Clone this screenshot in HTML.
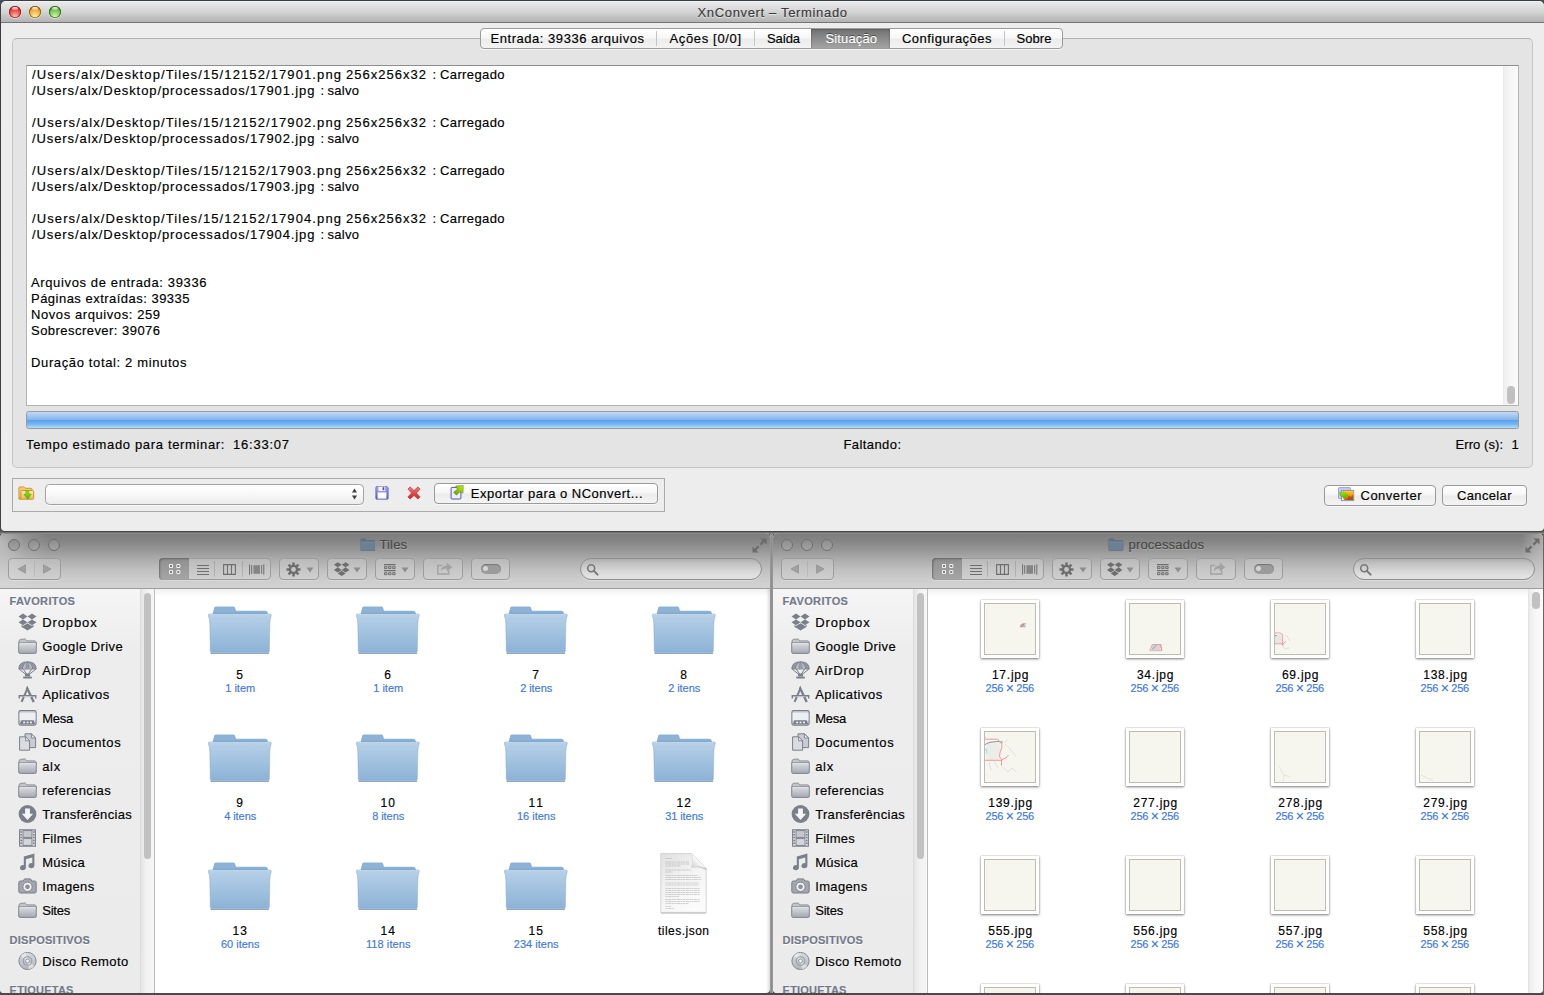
<!DOCTYPE html>
<html><head><meta charset="utf-8"><title>XnConvert</title><style>
html,body{margin:0;padding:0}
body{width:1544px;height:995px;overflow:hidden;background:#3e4a55;font-family:"Liberation Sans",sans-serif;position:relative}
div,svg{position:absolute;box-sizing:border-box}
.t{white-space:pre;-webkit-text-stroke:.16px currentColor;}
.btn{border:1px solid #9a9a9a;border-radius:4px;background:linear-gradient(#ffffff,#f6f6f6 45%,#ececec 55%,#f4f4f4);box-shadow:0 1px 0 rgba(255,255,255,.6)}
.fb{border:1px solid #9c9c9c;border-radius:4px;background:linear-gradient(rgba(255,255,255,.18),rgba(255,255,255,.06));box-shadow:0 1px 0 rgba(255,255,255,.25)}
</style></head><body>
<svg width="0" height="0" style="left:0;top:0"><defs><linearGradient id="sfg" x1="0" y1="0" x2="0" y2="1"><stop offset="0" stop-color="#dcdee2"/><stop offset="1" stop-color="#a3a7b0"/></linearGradient><linearGradient id="dsg" x1="0" y1="0" x2="0" y2="1"><stop offset="0" stop-color="#d9dbdf"/><stop offset="1" stop-color="#b1b4bb"/></linearGradient></defs></svg>
<div style="left:0px;top:0px;width:1544px;height:995px;background:linear-gradient(#44505a,#4a4d50 30px,#555 100%)"></div>
<div style="left:0px;top:531px;width:1544px;height:1px;background:#595959"></div>
<div style="left:0px;top:532px;width:1544px;height:1px;background:#6e6e6e"></div>
<div style="left:0px;top:533px;width:1544px;height:1px;background:#858585"></div>
<div style="left:0px;top:533px;width:770px;height:460px;background:#fff;border-radius:5px 5px 4px 4px;overflow:hidden">
<div style="left:0px;top:-533px;width:1544px;height:995px">
<div style="left:0px;top:533px;width:770px;height:55px;background:linear-gradient(#7c7c7c 0%,#858585 14%,#989898 32%,#aeaeae 50%,#c1c1c1 68%,#cdcdcd 85%,#d3d3d3 100%);"></div>
<div style="left:0px;top:588px;width:770px;height:1px;background:#9d9d9d"></div>
<div style="left:0px;top:533px;width:770px;height:1px;background:rgba(255,255,255,.10)"></div>
<div style="left:0px;top:534px;width:52px;height:54px;background:radial-gradient(ellipse 48px 62px at 0 8px,rgba(255,255,255,.42),rgba(255,255,255,.13) 50%,rgba(255,255,255,0) 100%)"></div>
<div style="left:8px;top:539px;width:12px;height:12px;border-radius:50%;border:1px solid #6f6f6f;background:linear-gradient(#8d8d8d,#a3a3a3)"></div>
<div style="left:28px;top:539px;width:12px;height:12px;border-radius:50%;border:1px solid #6f6f6f;background:linear-gradient(#8d8d8d,#a3a3a3)"></div>
<div style="left:48px;top:539px;width:12px;height:12px;border-radius:50%;border:1px solid #6f6f6f;background:linear-gradient(#8d8d8d,#a3a3a3)"></div>
<div class="fb" style="left:8px;top:558px;width:53px;height:22px;"><div style="left:25.3px;top:2px;width:1px;height:16px;background:rgba(0,0,0,.08)"></div><svg style="left:8px;top:5px" width="10" height="10" viewBox="0 0 10 10"><path d="M8.5 .8 V9.2 L1 5Z" fill="#a0a0a0" stroke="#8a8a8a" stroke-width=".6"/></svg><svg style="left:33px;top:5px" width="10" height="10" viewBox="0 0 10 10"><path d="M1.5 .8 V9.2 L9 5Z" fill="#a0a0a0" stroke="#8a8a8a" stroke-width=".6"/></svg></div>
<div class="fb" style="left:159px;top:558px;width:112px;height:22px;"><div style="left:-1px;top:-1px;width:30px;height:22px;border-radius:4px 0 0 4px;background:linear-gradient(#8f8f8f,#a6a6a6);box-shadow:inset 1px 1px 2px rgba(0,0,0,.3)"></div><div style="left:54.3px;top:2px;width:1px;height:16px;background:rgba(0,0,0,.13)"></div><div style="left:81.8px;top:2px;width:1px;height:16px;background:rgba(0,0,0,.13)"></div><svg style="left:8.8px;top:5.1px" width="12" height="11" viewBox="0 0 12 11"><path d="M.5 .5h3v3h-3zM7.8 .5h3v3h-3zM.5 6.6h3v3h-3zM7.8 6.6h3v3h-3z" fill="#7a7a7a" stroke="#f4f4f4" stroke-width="1"/></svg><svg style="left:36.7px;top:5px" width="12" height="12" viewBox="0 0 12 12"><path d="M0 1.5H12M0 4.5H12M0 7.5H12M0 10.5H12" stroke="#6e6e6e" stroke-width="1.1"/></svg><svg style="left:63px;top:4.8px" width="13" height="11" viewBox="0 0 13 11"><path d="M.6 .6H12.4V10.4H.6ZM4.5 .6V10.4M8.5 .6V10.4" fill="none" stroke="#6e6e6e" stroke-width="1.1"/></svg><svg style="left:88.6px;top:5px" width="16" height="11" viewBox="0 0 16 11"><path d="M.6 .3V10.7M2.7 1.2V9.8M12.7 1.2V9.8M14.8 .3V10.7" stroke="#6e6e6e" stroke-width="1"/><rect x="4.4" y="1.2" width="6.6" height="8.6" fill="#858585"/></svg></div>
<div class="fb" style="left:279.2px;top:558px;width:39.6px;height:21.6px;"><svg style="left:5.4px;top:2.6px" width="15" height="15" viewBox="0 0 15 15"><g stroke="#6e6e6e" stroke-width="2.5"><path d="M7.5 .5V14.5M.5 7.5H14.5M2.55 2.55L12.45 12.45M12.45 2.55L2.55 12.45"/></g><circle cx="7.5" cy="7.5" r="4.7" fill="#6e6e6e"/><circle cx="7.5" cy="7.5" r="2.4" fill="#c4c4c4"/></svg><svg style="left:25.6px;top:8px" width="8" height="6" viewBox="0 0 8 6"><path d="M.5 .5H7.5L4 5.5Z" fill="#8e8e8e"/></svg></div>
<div class="fb" style="left:327.1px;top:558px;width:39.5px;height:21.6px;"><svg style="left:5.2px;top:2.2px" width="17.4" height="16.2" viewBox="0 0 19 17"><path d="M5.2 1 L9.5 3.8 L5.2 6.6 L1 3.8Z M13.8 1 L18 3.8 L13.8 6.6 L9.5 3.8Z M5.2 6.6 L9.5 9.4 L5.2 12.2 L1 9.4Z M13.8 6.6 L18 9.4 L13.8 12.2 L9.5 9.4Z M5.2 13.2 L9.5 10.4 L13.8 13.2 L9.5 16Z" fill="#6e6e6e"/></svg><svg style="left:25px;top:8px" width="8" height="6" viewBox="0 0 8 6"><path d="M.5 .5H7.5L4 5.5Z" fill="#8e8e8e"/></svg></div>
<div class="fb" style="left:375px;top:558px;width:39.6px;height:21.6px;"><svg style="left:7.6px;top:4.7px" width="12" height="12" viewBox="0 0 12 12"><path d="M0 .6H11.6M0 6.6H11.6" stroke="#6e6e6e" stroke-width="1.1"/><path d="M.5 2.6h2.4v2h-2.4zM4.6 2.6h2.4v2h-2.4zM8.7 2.6h2.4v2h-2.4zM.5 8.7h2.4v2h-2.4zM4.6 8.7h2.4v2h-2.4zM8.7 8.7h2.4v2h-2.4z" fill="none" stroke="#6e6e6e" stroke-width="1"/></svg><svg style="left:25px;top:8px" width="8" height="6" viewBox="0 0 8 6"><path d="M.5 .5H7.5L4 5.5Z" fill="#8e8e8e"/></svg></div>
<div class="fb" style="left:423px;top:558px;width:39.5px;height:21.6px;"><svg style="left:11.5px;top:2.4px" width="17.5" height="14" viewBox="0 0 17 14"><path d="M6 4.5H1.5V13H12.5V9.5" fill="none" stroke="#a2a2a2" stroke-width="1.4"/><path d="M4.5 10.5Q5 5 10.5 4.6V1.5L16 6.2L10.5 10.5V7.6Q6.5 7.6 4.5 10.5Z" fill="#a2a2a2"/></svg></div>
<div class="fb" style="left:470.9px;top:558px;width:39.5px;height:21.6px;"><div style="left:9px;top:4.8px;width:20px;height:10px;border-radius:5px;background:#9b9b9b;box-shadow:inset 0 1px 1px rgba(0,0,0,.25)"></div><div style="left:11.5px;top:7.3px;width:5px;height:5px;border-radius:50%;background:#d4d4d4"></div></div>
<div style="left:579.5px;top:558px;width:182.5px;height:22px;border:1px solid #8e8e8e;border-radius:11px;background:linear-gradient(#b0b0b0,#c9c9c9 35%,#dedede 75%,#e4e4e4);box-shadow:0 1px 0 rgba(255,255,255,.3)"><svg style="left:5px;top:4px" width="14" height="14" viewBox="0 0 14 14"><circle cx="5.2" cy="5.2" r="3.5" fill="none" stroke="#777" stroke-width="1.6"/><path d="M7.9 7.9L11.6 11.6" stroke="#777" stroke-width="2" stroke-linecap="round"/></svg></div>
<svg style="left:752px;top:538px" width="15" height="15" viewBox="0 0 15 15"><path d="M8.5 .5H14.5V6.5L12.3 4.3L9.2 7.4L7.6 5.8L10.7 2.7ZM6.5 14.5H.5V8.5L2.7 10.7L5.8 7.6L7.4 9.2L4.3 12.3Z" fill="#6b6b6b"/></svg>
<svg style="left:359.7px;top:538.3px" width="15.8" height="13.5" viewBox="0 0 17 14" preserveAspectRatio="none"><path d="M.5 2Q.5 .5 2 .5H6L7.2 2.200H15Q16.500 2.200 16.500 3.700V12Q16.500 13.500 15 13.500H2Q.5 13.500 .5 12Z" fill="#5d6f82"/><path d="M1.100 3.800H15.900V12Q15.900 12.900 15 12.900H2Q1.100 12.900 1.100 12Z" fill="#6c8093"/><path d="M1.100 4.200H15.900" stroke="#7d90a3" stroke-width=".7"/></svg>
<div class="t" style="left:379.50px;top:536.10px;font-size:13px;line-height:17px;color:#474747;letter-spacing:0.133px;text-shadow:0 1px 0 rgba(255,255,255,.22);">Tiles</div>
<div style="left:0px;top:589px;width:140px;height:404px;background:linear-gradient(#f5f5f5,#ededed 60px,#ebebeb)"></div>
<div style="left:139.5px;top:589px;width:15px;height:404px;background:linear-gradient(90deg,#e4e4e4,#f1f1f1 40%,#f6f6f6);border-left:1px solid #dcdcdc;border-right:1px solid #bdbdbd"></div>
<div style="left:143.5px;top:592.5px;width:7.5px;height:266px;background:#c1c1c1;border-radius:4px"></div>
<div class="t" style="left:9.60px;top:593.89px;font-size:11px;line-height:15px;color:#727989;letter-spacing:0.344px;font-weight:700;text-shadow:0 1px 0 #fff;">FAVORITOS</div>
<svg style="left:17.5px;top:613px" width="19" height="18" viewBox="0 0 19 18"><path d="M5 .6 L9.5 3.5 L5 6.4 L.5 3.5Z M14 .6 L18.5 3.5 L14 6.4 L9.5 3.5Z M5 6.4 L9.5 9.3 L5 12.2 L.5 9.3Z M14 6.4 L18.5 9.3 L14 12.2 L9.5 9.3Z" fill="#7a7f89"/><path d="M5 13.1 L9.5 10.2 L14 13.1 L15.6 12.1 V13.8 L9.5 17.4 L3.4 13.8 V12.1Z" fill="#7a7f89"/></svg>
<div class="t" style="left:42.20px;top:613.80px;font-size:13px;line-height:17px;color:#000;letter-spacing:0.893px;">Dropbox</div>
<svg style="left:17.5px;top:637.7px" width="19" height="17" viewBox="0 0 19 17"><path d="M1 3.2 Q1 1.6 2.4 1.4 L6.6 1 Q7.6 1 8 1.7 L8.7 2.9 H16.6 Q18 2.9 18 4.3 V6 H1Z" fill="#c2c5ca" stroke="#858992" stroke-width=".9"/><path d="M.7 4.9 H18.3 V14 Q18.3 15.4 16.9 15.4 H2.1 Q.7 15.4 .7 14Z" fill="url(#sfg)" stroke="#7b7f89" stroke-width=".9"/><path d="M1.3 5.6H17.7" stroke="#eceef0" stroke-width=".8"/></svg>
<div class="t" style="left:42.20px;top:637.80px;font-size:13px;line-height:17px;color:#000;letter-spacing:0.421px;">Google Drive</div>
<svg style="left:17.5px;top:661px" width="19" height="18" viewBox="0 0 19 18"><path d="M.8 8 Q.8 .8 9.5 .8 Q18.2 .8 18.2 8 Z" fill="#9095a0" stroke="#7a7f89" stroke-width=".9"/><path d="M4.4 7.8 Q5 2 9.5 1 Q14 2 14.6 7.8" fill="#b9bdc5" stroke="#7a7f89" stroke-width=".8"/><path d="M7.8 7.8 Q8 3 9.5 1 Q11 3 11.2 7.8" fill="#9a9fa9" stroke="#7a7f89" stroke-width=".6"/><path d="M1.2 8.2 L7.6 13.2 M17.8 8.2 L11.4 13.2 M5.4 8.2 L8.6 13 M13.6 8.2 L10.4 13" stroke="#7a7f89" stroke-width="1"/><rect x="7" y="12.6" width="5" height="2.8" fill="#7a7f89"/><rect x="5.2" y="15.6" width="8.6" height="1.9" fill="#7a7f89"/></svg>
<div class="t" style="left:42.20px;top:661.80px;font-size:13px;line-height:17px;color:#000;letter-spacing:0.739px;">AirDrop</div>
<svg style="left:17.5px;top:685px" width="19" height="18" viewBox="0 0 19 18"><path d="M9.6 .8 L2.6 16.6 L4.6 17.3 L10.2 4 Z" fill="#7a7f89"/><path d="M9.2 .8 L16.8 16.4 L14.6 17.4 L8 3.4Z" fill="#7a7f89"/><path d="M.6 10 H18.4 V13.4 H17 V11.6 H2 V13.4 H.6Z" fill="#7a7f89"/><path d="M5.6 11.6H13.6" stroke="#c5c8ce" stroke-width="1.2"/></svg>
<div class="t" style="left:42.20px;top:685.80px;font-size:13px;line-height:17px;color:#000;letter-spacing:0.486px;">Aplicativos</div>
<svg style="left:17.5px;top:709px" width="19" height="18" viewBox="0 0 19 18"><rect x=".9" y="1.6" width="17.2" height="14.6" rx="1.6" fill="#d5d7dc" stroke="#7a7f89" stroke-width="1.1"/><rect x="1.6" y="4" width="15.8" height="7.4" fill="#eceef1"/><path d="M3.4 11.2 H15.6 L17.4 15.5 H1.6Z" fill="#7a7f89"/><rect x="5.2" y="12.6" width="1.9" height="1.7" fill="#f4f4f6"/><rect x="8.6" y="12.6" width="1.9" height="1.7" fill="#f4f4f6"/><rect x="12" y="12.6" width="1.9" height="1.7" fill="#f4f4f6"/></svg>
<div class="t" style="left:42.20px;top:709.80px;font-size:13px;line-height:17px;color:#000;letter-spacing:-0.263px;">Mesa</div>
<svg style="left:17.5px;top:733px" width="19" height="18" viewBox="0 0 19 18"><path d="M7 .8 H13.6 L17.6 4.8 V14.6 H7Z" fill="#c9ccd2" stroke="#7a7f89" stroke-width="1"/><path d="M13.4 .8 V5 H17.6Z" fill="#eceef1" stroke="#7a7f89" stroke-width=".9"/><path d="M1.6 3.8 H7.8 L11.6 7.6 V17.2 H1.6Z" fill="#dadce1" stroke="#7a7f89" stroke-width="1"/><path d="M7.6 3.8 V7.8 H11.6Z" fill="#f2f3f5" stroke="#7a7f89" stroke-width=".9"/></svg>
<div class="t" style="left:42.20px;top:733.80px;font-size:13px;line-height:17px;color:#000;letter-spacing:0.613px;">Documentos</div>
<svg style="left:17.5px;top:757.7px" width="19" height="17" viewBox="0 0 19 17"><path d="M1 3.2 Q1 1.6 2.4 1.4 L6.6 1 Q7.6 1 8 1.7 L8.7 2.9 H16.6 Q18 2.9 18 4.3 V6 H1Z" fill="#c2c5ca" stroke="#858992" stroke-width=".9"/><path d="M.7 4.9 H18.3 V14 Q18.3 15.4 16.9 15.4 H2.1 Q.7 15.4 .7 14Z" fill="url(#sfg)" stroke="#7b7f89" stroke-width=".9"/><path d="M1.3 5.6H17.7" stroke="#eceef0" stroke-width=".8"/></svg>
<div class="t" style="left:42.20px;top:757.80px;font-size:13px;line-height:17px;color:#000;letter-spacing:0.690px;">alx</div>
<svg style="left:17.5px;top:781.7px" width="19" height="17" viewBox="0 0 19 17"><path d="M1 3.2 Q1 1.6 2.4 1.4 L6.6 1 Q7.6 1 8 1.7 L8.7 2.9 H16.6 Q18 2.9 18 4.3 V6 H1Z" fill="#c2c5ca" stroke="#858992" stroke-width=".9"/><path d="M.7 4.9 H18.3 V14 Q18.3 15.4 16.9 15.4 H2.1 Q.7 15.4 .7 14Z" fill="url(#sfg)" stroke="#7b7f89" stroke-width=".9"/><path d="M1.3 5.6H17.7" stroke="#eceef0" stroke-width=".8"/></svg>
<div class="t" style="left:42.20px;top:781.80px;font-size:13px;line-height:17px;color:#000;letter-spacing:0.419px;">referencias</div>
<svg style="left:17.5px;top:805px" width="19" height="18" viewBox="0 0 19 18"><circle cx="9.5" cy="9" r="8.9" fill="#7a7f89"/><path d="M7.1 3.6 H11.9 V8.8 H15.2 L9.5 14.9 L3.8 8.8 H7.1Z" fill="#f6f6f8"/></svg>
<div class="t" style="left:42.20px;top:805.80px;font-size:13px;line-height:17px;color:#000;letter-spacing:0.308px;">Transferências</div>
<svg style="left:17.5px;top:829px" width="19" height="18" viewBox="0 0 19 18"><rect x="1.6" y=".8" width="15.8" height="16.4" fill="#dfe1e5" stroke="#7a7f89" stroke-width="1.1"/><rect x="5" y="1.6" width="9" height="6.8" fill="#c4c7cd" stroke="#7a7f89" stroke-width=".9"/><rect x="5" y="9.6" width="9" height="6.8" fill="#d3d6db" stroke="#7a7f89" stroke-width=".9"/><path d="M2.4 3H4M2.4 5.8H4M2.4 8.6H4M2.4 11.4H4M2.4 14.2H4M15 3H16.6M15 5.8H16.6M15 8.6H16.6M15 11.4H16.6M15 14.2H16.6" stroke="#7a7f89" stroke-width="1.5"/></svg>
<div class="t" style="left:42.20px;top:829.80px;font-size:13px;line-height:17px;color:#000;letter-spacing:0.244px;">Filmes</div>
<svg style="left:17.5px;top:853px" width="19" height="18" viewBox="0 0 19 18"><path d="M5.8 3.4 L16.4 .6 V12.6 A3 2.5 -15 1 1 14.3 10.2 V4.6 L7.9 6.3 V14.6 A3 2.5 -15 1 1 5.8 12.2Z" fill="#7a7f89"/></svg>
<div class="t" style="left:42.20px;top:853.80px;font-size:13px;line-height:17px;color:#000;letter-spacing:0.264px;">Música</div>
<svg style="left:17.5px;top:877px" width="19" height="18" viewBox="0 0 19 18"><path d="M.8 5.6 Q.8 4 2.4 4 H5.2 L6.4 1.9 H12.6 L13.8 4 H16.6 Q18.2 4 18.2 5.6 V14.4 Q18.2 16 16.6 16 H2.4 Q.8 16 .8 14.4Z" fill="#a2a6af" stroke="#7a7f89" stroke-width="1"/><circle cx="9.5" cy="9.8" r="4.6" fill="#f4f5f6" stroke="#7a7f89" stroke-width=".9"/><circle cx="9.5" cy="9.8" r="2.4" fill="#8b9099"/></svg>
<div class="t" style="left:42.20px;top:877.80px;font-size:13px;line-height:17px;color:#000;letter-spacing:0.356px;">Imagens</div>
<svg style="left:17.5px;top:901.7px" width="19" height="17" viewBox="0 0 19 17"><path d="M1 3.2 Q1 1.6 2.4 1.4 L6.6 1 Q7.6 1 8 1.7 L8.7 2.9 H16.6 Q18 2.9 18 4.3 V6 H1Z" fill="#c2c5ca" stroke="#858992" stroke-width=".9"/><path d="M.7 4.9 H18.3 V14 Q18.3 15.4 16.9 15.4 H2.1 Q.7 15.4 .7 14Z" fill="url(#sfg)" stroke="#7b7f89" stroke-width=".9"/><path d="M1.3 5.6H17.7" stroke="#eceef0" stroke-width=".8"/></svg>
<div class="t" style="left:42.20px;top:901.80px;font-size:13px;line-height:17px;color:#000;letter-spacing:-0.226px;">Sites</div>
<div class="t" style="left:9.60px;top:932.89px;font-size:11px;line-height:15px;color:#727989;letter-spacing:0.243px;font-weight:700;text-shadow:0 1px 0 #fff;">DISPOSITIVOS</div>
<svg style="left:17.5px;top:952px" width="19" height="18" viewBox="0 0 19 18"><circle cx="9.5" cy="9" r="8.6" fill="url(#dsg)" stroke="#858992" stroke-width="1"/><path d="M9.5 9 L2.6 4 A8.5 8.5 0 0 1 8 .6Z M9.5 9 L16.4 14 A8.5 8.5 0 0 1 11 17.4Z" fill="#f2f3f5" opacity=".6"/><circle cx="9.5" cy="9" r="4.3" fill="none" stroke="#9a9ea7" stroke-width="1.1"/><circle cx="9.5" cy="9" r="1.9" fill="#f6f6f8" stroke="#8f939c" stroke-width=".9"/></svg>
<div class="t" style="left:42.20px;top:953.00px;font-size:13px;line-height:17px;color:#000;letter-spacing:0.396px;">Disco Remoto</div>
<div class="t" style="left:9.60px;top:982.89px;font-size:11px;line-height:15px;color:#727989;letter-spacing:0.208px;font-weight:700;text-shadow:0 1px 0 #fff;">ETIQUETAS</div>
<div style="left:155px;top:589px;width:615px;height:8px;background:linear-gradient(#f1f1f1,#fff)"></div>
<svg style="left:207.2px;top:605.6px" width="66" height="50" viewBox="0 0 66 50"><defs><linearGradient id="ff" x1="0" y1="0" x2="0" y2="1"><stop offset="0" stop-color="#b7d1e8"/><stop offset=".45" stop-color="#a3c3e0"/><stop offset="1" stop-color="#8cb2d7"/></linearGradient></defs><path d="M7.2 1.6 Q7.7 0.4 9.2 0.4 H26 Q27.5 0.4 28 1.6 L29 4.8 H58.5 Q60.3 4.8 60.5 6.5 L61 9 H5.4 Z" fill="#8db2d5"/><path d="M6 9 L6.3 6.6 H60.4 L61 9Z" fill="#84a9cd"/><path d="M2.6 8 H63 Q64.6 8 64.3 9.6 Q62.9 13 62.8 18 L62.3 44.9 Q62.3 46.7 60.5 46.7 H5.1 Q3.3 46.7 3.3 44.9 L2.8 18 Q2.7 13 1.3 9.6 Q1 8 2.6 8Z" fill="url(#ff)" stroke="#86abd0" stroke-width=".5"/><path d="M2.4 8.6 H63.2" stroke="#c9deef" stroke-width=".8" opacity=".9"/><path d="M3.5 46 Q3.7 47.2 5.1 47.2 H60.5 Q61.9 47.2 62.1 46 V46.9 Q61.9 48.1 60.5 48.1 H5.1 Q3.7 48.1 3.5 46.9Z" fill="#5b7c9c" opacity=".85"/></svg>
<div class="t" style="left:236.36px;top:666.84px;font-size:12px;line-height:16px;color:#000;">5</div>
<div class="t" style="left:225.20px;top:680.69px;font-size:11px;line-height:15px;color:#3f7ad6;letter-spacing:0.009px;">1 item</div>
<svg style="left:355.2px;top:605.6px" width="66" height="50" viewBox="0 0 66 50"><defs><linearGradient id="ff" x1="0" y1="0" x2="0" y2="1"><stop offset="0" stop-color="#b7d1e8"/><stop offset=".45" stop-color="#a3c3e0"/><stop offset="1" stop-color="#8cb2d7"/></linearGradient></defs><path d="M7.2 1.6 Q7.7 0.4 9.2 0.4 H26 Q27.5 0.4 28 1.6 L29 4.8 H58.5 Q60.3 4.8 60.5 6.5 L61 9 H5.4 Z" fill="#8db2d5"/><path d="M6 9 L6.3 6.6 H60.4 L61 9Z" fill="#84a9cd"/><path d="M2.6 8 H63 Q64.6 8 64.3 9.6 Q62.9 13 62.8 18 L62.3 44.9 Q62.3 46.7 60.5 46.7 H5.1 Q3.3 46.7 3.3 44.9 L2.8 18 Q2.7 13 1.3 9.6 Q1 8 2.6 8Z" fill="url(#ff)" stroke="#86abd0" stroke-width=".5"/><path d="M2.4 8.6 H63.2" stroke="#c9deef" stroke-width=".8" opacity=".9"/><path d="M3.5 46 Q3.7 47.2 5.1 47.2 H60.5 Q61.9 47.2 62.1 46 V46.9 Q61.9 48.1 60.5 48.1 H5.1 Q3.7 48.1 3.5 46.9Z" fill="#5b7c9c" opacity=".85"/></svg>
<div class="t" style="left:384.36px;top:666.84px;font-size:12px;line-height:16px;color:#000;">6</div>
<div class="t" style="left:373.20px;top:680.69px;font-size:11px;line-height:15px;color:#3f7ad6;letter-spacing:0.009px;">1 item</div>
<svg style="left:503.2px;top:605.6px" width="66" height="50" viewBox="0 0 66 50"><defs><linearGradient id="ff" x1="0" y1="0" x2="0" y2="1"><stop offset="0" stop-color="#b7d1e8"/><stop offset=".45" stop-color="#a3c3e0"/><stop offset="1" stop-color="#8cb2d7"/></linearGradient></defs><path d="M7.2 1.6 Q7.7 0.4 9.2 0.4 H26 Q27.5 0.4 28 1.6 L29 4.8 H58.5 Q60.3 4.8 60.5 6.5 L61 9 H5.4 Z" fill="#8db2d5"/><path d="M6 9 L6.3 6.6 H60.4 L61 9Z" fill="#84a9cd"/><path d="M2.6 8 H63 Q64.6 8 64.3 9.6 Q62.9 13 62.8 18 L62.3 44.9 Q62.3 46.7 60.5 46.7 H5.1 Q3.3 46.7 3.3 44.9 L2.8 18 Q2.7 13 1.3 9.6 Q1 8 2.6 8Z" fill="url(#ff)" stroke="#86abd0" stroke-width=".5"/><path d="M2.4 8.6 H63.2" stroke="#c9deef" stroke-width=".8" opacity=".9"/><path d="M3.5 46 Q3.7 47.2 5.1 47.2 H60.5 Q61.9 47.2 62.1 46 V46.9 Q61.9 48.1 60.5 48.1 H5.1 Q3.7 48.1 3.5 46.9Z" fill="#5b7c9c" opacity=".85"/></svg>
<div class="t" style="left:532.36px;top:666.84px;font-size:12px;line-height:16px;color:#000;">7</div>
<div class="t" style="left:520.20px;top:680.69px;font-size:11px;line-height:15px;color:#3f7ad6;letter-spacing:-0.069px;">2 itens</div>
<svg style="left:651.2px;top:605.6px" width="66" height="50" viewBox="0 0 66 50"><defs><linearGradient id="ff" x1="0" y1="0" x2="0" y2="1"><stop offset="0" stop-color="#b7d1e8"/><stop offset=".45" stop-color="#a3c3e0"/><stop offset="1" stop-color="#8cb2d7"/></linearGradient></defs><path d="M7.2 1.6 Q7.7 0.4 9.2 0.4 H26 Q27.5 0.4 28 1.6 L29 4.8 H58.5 Q60.3 4.8 60.5 6.5 L61 9 H5.4 Z" fill="#8db2d5"/><path d="M6 9 L6.3 6.6 H60.4 L61 9Z" fill="#84a9cd"/><path d="M2.6 8 H63 Q64.6 8 64.3 9.6 Q62.9 13 62.8 18 L62.3 44.9 Q62.3 46.7 60.5 46.7 H5.1 Q3.3 46.7 3.3 44.9 L2.8 18 Q2.7 13 1.3 9.6 Q1 8 2.6 8Z" fill="url(#ff)" stroke="#86abd0" stroke-width=".5"/><path d="M2.4 8.6 H63.2" stroke="#c9deef" stroke-width=".8" opacity=".9"/><path d="M3.5 46 Q3.7 47.2 5.1 47.2 H60.5 Q61.9 47.2 62.1 46 V46.9 Q61.9 48.1 60.5 48.1 H5.1 Q3.7 48.1 3.5 46.9Z" fill="#5b7c9c" opacity=".85"/></svg>
<div class="t" style="left:680.36px;top:666.84px;font-size:12px;line-height:16px;color:#000;">8</div>
<div class="t" style="left:668.20px;top:680.69px;font-size:11px;line-height:15px;color:#3f7ad6;letter-spacing:-0.069px;">2 itens</div>
<svg style="left:207.2px;top:733.6px" width="66" height="50" viewBox="0 0 66 50"><defs><linearGradient id="ff" x1="0" y1="0" x2="0" y2="1"><stop offset="0" stop-color="#b7d1e8"/><stop offset=".45" stop-color="#a3c3e0"/><stop offset="1" stop-color="#8cb2d7"/></linearGradient></defs><path d="M7.2 1.6 Q7.7 0.4 9.2 0.4 H26 Q27.5 0.4 28 1.6 L29 4.8 H58.5 Q60.3 4.8 60.5 6.5 L61 9 H5.4 Z" fill="#8db2d5"/><path d="M6 9 L6.3 6.6 H60.4 L61 9Z" fill="#84a9cd"/><path d="M2.6 8 H63 Q64.6 8 64.3 9.6 Q62.9 13 62.8 18 L62.3 44.9 Q62.3 46.7 60.5 46.7 H5.1 Q3.3 46.7 3.3 44.9 L2.8 18 Q2.7 13 1.3 9.6 Q1 8 2.6 8Z" fill="url(#ff)" stroke="#86abd0" stroke-width=".5"/><path d="M2.4 8.6 H63.2" stroke="#c9deef" stroke-width=".8" opacity=".9"/><path d="M3.5 46 Q3.7 47.2 5.1 47.2 H60.5 Q61.9 47.2 62.1 46 V46.9 Q61.9 48.1 60.5 48.1 H5.1 Q3.7 48.1 3.5 46.9Z" fill="#5b7c9c" opacity=".85"/></svg>
<div class="t" style="left:236.36px;top:794.84px;font-size:12px;line-height:16px;color:#000;">9</div>
<div class="t" style="left:224.20px;top:808.69px;font-size:11px;line-height:15px;color:#3f7ad6;letter-spacing:-0.069px;">4 itens</div>
<svg style="left:355.2px;top:733.6px" width="66" height="50" viewBox="0 0 66 50"><defs><linearGradient id="ff" x1="0" y1="0" x2="0" y2="1"><stop offset="0" stop-color="#b7d1e8"/><stop offset=".45" stop-color="#a3c3e0"/><stop offset="1" stop-color="#8cb2d7"/></linearGradient></defs><path d="M7.2 1.6 Q7.7 0.4 9.2 0.4 H26 Q27.5 0.4 28 1.6 L29 4.8 H58.5 Q60.3 4.8 60.5 6.5 L61 9 H5.4 Z" fill="#8db2d5"/><path d="M6 9 L6.3 6.6 H60.4 L61 9Z" fill="#84a9cd"/><path d="M2.6 8 H63 Q64.6 8 64.3 9.6 Q62.9 13 62.8 18 L62.3 44.9 Q62.3 46.7 60.5 46.7 H5.1 Q3.3 46.7 3.3 44.9 L2.8 18 Q2.7 13 1.3 9.6 Q1 8 2.6 8Z" fill="url(#ff)" stroke="#86abd0" stroke-width=".5"/><path d="M2.4 8.6 H63.2" stroke="#c9deef" stroke-width=".8" opacity=".9"/><path d="M3.5 46 Q3.7 47.2 5.1 47.2 H60.5 Q61.9 47.2 62.1 46 V46.9 Q61.9 48.1 60.5 48.1 H5.1 Q3.7 48.1 3.5 46.9Z" fill="#5b7c9c" opacity=".85"/></svg>
<div class="t" style="left:380.45px;top:794.84px;font-size:12px;line-height:16px;color:#000;letter-spacing:1.152px;">10</div>
<div class="t" style="left:372.20px;top:808.69px;font-size:11px;line-height:15px;color:#3f7ad6;letter-spacing:-0.069px;">8 itens</div>
<svg style="left:503.2px;top:733.6px" width="66" height="50" viewBox="0 0 66 50"><defs><linearGradient id="ff" x1="0" y1="0" x2="0" y2="1"><stop offset="0" stop-color="#b7d1e8"/><stop offset=".45" stop-color="#a3c3e0"/><stop offset="1" stop-color="#8cb2d7"/></linearGradient></defs><path d="M7.2 1.6 Q7.7 0.4 9.2 0.4 H26 Q27.5 0.4 28 1.6 L29 4.8 H58.5 Q60.3 4.8 60.5 6.5 L61 9 H5.4 Z" fill="#8db2d5"/><path d="M6 9 L6.3 6.6 H60.4 L61 9Z" fill="#84a9cd"/><path d="M2.6 8 H63 Q64.6 8 64.3 9.6 Q62.9 13 62.8 18 L62.3 44.9 Q62.3 46.7 60.5 46.7 H5.1 Q3.3 46.7 3.3 44.9 L2.8 18 Q2.7 13 1.3 9.6 Q1 8 2.6 8Z" fill="url(#ff)" stroke="#86abd0" stroke-width=".5"/><path d="M2.4 8.6 H63.2" stroke="#c9deef" stroke-width=".8" opacity=".9"/><path d="M3.5 46 Q3.7 47.2 5.1 47.2 H60.5 Q61.9 47.2 62.1 46 V46.9 Q61.9 48.1 60.5 48.1 H5.1 Q3.7 48.1 3.5 46.9Z" fill="#5b7c9c" opacity=".85"/></svg>
<div class="t" style="left:528.45px;top:794.84px;font-size:12px;line-height:16px;color:#000;letter-spacing:2.043px;">11</div>
<div class="t" style="left:517.00px;top:808.69px;font-size:11px;line-height:15px;color:#3f7ad6;letter-spacing:-0.019px;">16 itens</div>
<svg style="left:651.2px;top:733.6px" width="66" height="50" viewBox="0 0 66 50"><defs><linearGradient id="ff" x1="0" y1="0" x2="0" y2="1"><stop offset="0" stop-color="#b7d1e8"/><stop offset=".45" stop-color="#a3c3e0"/><stop offset="1" stop-color="#8cb2d7"/></linearGradient></defs><path d="M7.2 1.6 Q7.7 0.4 9.2 0.4 H26 Q27.5 0.4 28 1.6 L29 4.8 H58.5 Q60.3 4.8 60.5 6.5 L61 9 H5.4 Z" fill="#8db2d5"/><path d="M6 9 L6.3 6.6 H60.4 L61 9Z" fill="#84a9cd"/><path d="M2.6 8 H63 Q64.6 8 64.3 9.6 Q62.9 13 62.8 18 L62.3 44.9 Q62.3 46.7 60.5 46.7 H5.1 Q3.3 46.7 3.3 44.9 L2.8 18 Q2.7 13 1.3 9.6 Q1 8 2.6 8Z" fill="url(#ff)" stroke="#86abd0" stroke-width=".5"/><path d="M2.4 8.6 H63.2" stroke="#c9deef" stroke-width=".8" opacity=".9"/><path d="M3.5 46 Q3.7 47.2 5.1 47.2 H60.5 Q61.9 47.2 62.1 46 V46.9 Q61.9 48.1 60.5 48.1 H5.1 Q3.7 48.1 3.5 46.9Z" fill="#5b7c9c" opacity=".85"/></svg>
<div class="t" style="left:676.45px;top:794.84px;font-size:12px;line-height:16px;color:#000;letter-spacing:1.152px;">12</div>
<div class="t" style="left:665.20px;top:808.69px;font-size:11px;line-height:15px;color:#3f7ad6;letter-spacing:-0.076px;">31 itens</div>
<svg style="left:207.2px;top:861.6px" width="66" height="50" viewBox="0 0 66 50"><defs><linearGradient id="ff" x1="0" y1="0" x2="0" y2="1"><stop offset="0" stop-color="#b7d1e8"/><stop offset=".45" stop-color="#a3c3e0"/><stop offset="1" stop-color="#8cb2d7"/></linearGradient></defs><path d="M7.2 1.6 Q7.7 0.4 9.2 0.4 H26 Q27.5 0.4 28 1.6 L29 4.8 H58.5 Q60.3 4.8 60.5 6.5 L61 9 H5.4 Z" fill="#8db2d5"/><path d="M6 9 L6.3 6.6 H60.4 L61 9Z" fill="#84a9cd"/><path d="M2.6 8 H63 Q64.6 8 64.3 9.6 Q62.9 13 62.8 18 L62.3 44.9 Q62.3 46.7 60.5 46.7 H5.1 Q3.3 46.7 3.3 44.9 L2.8 18 Q2.7 13 1.3 9.6 Q1 8 2.6 8Z" fill="url(#ff)" stroke="#86abd0" stroke-width=".5"/><path d="M2.4 8.6 H63.2" stroke="#c9deef" stroke-width=".8" opacity=".9"/><path d="M3.5 46 Q3.7 47.2 5.1 47.2 H60.5 Q61.9 47.2 62.1 46 V46.9 Q61.9 48.1 60.5 48.1 H5.1 Q3.7 48.1 3.5 46.9Z" fill="#5b7c9c" opacity=".85"/></svg>
<div class="t" style="left:232.45px;top:922.84px;font-size:12px;line-height:16px;color:#000;letter-spacing:1.152px;">13</div>
<div class="t" style="left:221.00px;top:936.69px;font-size:11px;line-height:15px;color:#3f7ad6;letter-spacing:-0.019px;">60 itens</div>
<svg style="left:355.2px;top:861.6px" width="66" height="50" viewBox="0 0 66 50"><defs><linearGradient id="ff" x1="0" y1="0" x2="0" y2="1"><stop offset="0" stop-color="#b7d1e8"/><stop offset=".45" stop-color="#a3c3e0"/><stop offset="1" stop-color="#8cb2d7"/></linearGradient></defs><path d="M7.2 1.6 Q7.7 0.4 9.2 0.4 H26 Q27.5 0.4 28 1.6 L29 4.8 H58.5 Q60.3 4.8 60.5 6.5 L61 9 H5.4 Z" fill="#8db2d5"/><path d="M6 9 L6.3 6.6 H60.4 L61 9Z" fill="#84a9cd"/><path d="M2.6 8 H63 Q64.6 8 64.3 9.6 Q62.9 13 62.8 18 L62.3 44.9 Q62.3 46.7 60.5 46.7 H5.1 Q3.3 46.7 3.3 44.9 L2.8 18 Q2.7 13 1.3 9.6 Q1 8 2.6 8Z" fill="url(#ff)" stroke="#86abd0" stroke-width=".5"/><path d="M2.4 8.6 H63.2" stroke="#c9deef" stroke-width=".8" opacity=".9"/><path d="M3.5 46 Q3.7 47.2 5.1 47.2 H60.5 Q61.9 47.2 62.1 46 V46.9 Q61.9 48.1 60.5 48.1 H5.1 Q3.7 48.1 3.5 46.9Z" fill="#5b7c9c" opacity=".85"/></svg>
<div class="t" style="left:380.45px;top:922.84px;font-size:12px;line-height:16px;color:#000;letter-spacing:1.152px;">14</div>
<div class="t" style="left:365.90px;top:936.69px;font-size:11px;line-height:15px;color:#3f7ad6;letter-spacing:0.096px;">118 itens</div>
<svg style="left:503.2px;top:861.6px" width="66" height="50" viewBox="0 0 66 50"><defs><linearGradient id="ff" x1="0" y1="0" x2="0" y2="1"><stop offset="0" stop-color="#b7d1e8"/><stop offset=".45" stop-color="#a3c3e0"/><stop offset="1" stop-color="#8cb2d7"/></linearGradient></defs><path d="M7.2 1.6 Q7.7 0.4 9.2 0.4 H26 Q27.5 0.4 28 1.6 L29 4.8 H58.5 Q60.3 4.8 60.5 6.5 L61 9 H5.4 Z" fill="#8db2d5"/><path d="M6 9 L6.3 6.6 H60.4 L61 9Z" fill="#84a9cd"/><path d="M2.6 8 H63 Q64.6 8 64.3 9.6 Q62.9 13 62.8 18 L62.3 44.9 Q62.3 46.7 60.5 46.7 H5.1 Q3.3 46.7 3.3 44.9 L2.8 18 Q2.7 13 1.3 9.6 Q1 8 2.6 8Z" fill="url(#ff)" stroke="#86abd0" stroke-width=".5"/><path d="M2.4 8.6 H63.2" stroke="#c9deef" stroke-width=".8" opacity=".9"/><path d="M3.5 46 Q3.7 47.2 5.1 47.2 H60.5 Q61.9 47.2 62.1 46 V46.9 Q61.9 48.1 60.5 48.1 H5.1 Q3.7 48.1 3.5 46.9Z" fill="#5b7c9c" opacity=".85"/></svg>
<div class="t" style="left:528.45px;top:922.84px;font-size:12px;line-height:16px;color:#000;letter-spacing:1.152px;">15</div>
<div class="t" style="left:513.80px;top:936.69px;font-size:11px;line-height:15px;color:#3f7ad6;letter-spacing:0.019px;">234 itens</div>
<svg style="left:660.4px;top:852.4px" width="48" height="62" viewBox="0 0 48 62"><defs><linearGradient id="dg" x1="0" y1="0" x2=".6" y2="1"><stop offset="0" stop-color="#e0e0e0"/><stop offset=".45" stop-color="#f1f1f1"/><stop offset="1" stop-color="#fbfbfb"/></linearGradient><linearGradient id="dc" x1="0" y1="1" x2="1" y2="0"><stop offset="0" stop-color="#c9c9c9"/><stop offset=".5" stop-color="#fdfdfd"/><stop offset="1" stop-color="#f2f2f2"/></linearGradient></defs><path d="M1.2 2 H46 V60.8 H1.2Z" fill="#000" opacity=".0"/><path d="M.8 60.3 H46.2 V61.3 H.8Z" fill="#8f8f8f" opacity=".75"/><path d="M1.4 61.3 H45.6 V62 H1.4Z" fill="#b9b9b9" opacity=".6"/><path d="M.8 1.6 H31.6 L46.2 16.6 V60.4 H.8Z" fill="url(#dg)" stroke="#c6c6c6" stroke-width=".7"/><path d="M33 15.5 Q40 13.5 46.2 18 L46.2 16.6 L40 14Z" fill="#777" opacity=".55"/><path d="M31.6 1.6 Q33.6 9.5 31.4 15.6 Q38.5 13.2 46.2 16.6Z" fill="url(#dc)" stroke="#cfcfcf" stroke-width=".5"/><g stroke="#9f9f9f" stroke-width=".55" opacity=".8" stroke-dasharray="2.2 .5 3.4 .45 1.6 .5"><path d="M5.5 6.5H12M5.5 10H29M5.5 12H30M5.5 14H21M5.5 18H31M5.5 20H12.5M5.5 23.5H38M5.5 25.5H41M5.5 27.5H41.5M5.5 31H39M5.5 33H38.5M5.5 36.5H40M5.5 38.5H40M5.5 40.5H40M5.5 42.5H39.5M5.5 44.5H19M5.5 47.5H40M5.5 49.5H40M5.5 51.5H28.5M5.5 54.5H11M5.5 56.5H14.5"/></g></svg>
<div class="t" style="left:658.00px;top:922.84px;font-size:12px;line-height:16px;color:#000;letter-spacing:0.479px;">tiles.json</div>
</div></div>
<div style="left:766px;top:589px;width:4px;height:404px;background:linear-gradient(90deg,rgba(0,0,0,0),rgba(0,0,0,.13));z-index:2"></div>
<div style="left:770px;top:534px;width:3px;height:461px;background:linear-gradient(90deg,#a2a2a2,#8c8c8c 35%,#8f8f8f 75%,#a5a5a5)"></div>
<div style="left:773px;top:533px;width:770px;height:460px;background:#fff;border-radius:5px 5px 4px 4px;overflow:hidden">
<div style="left:-773px;top:-533px;width:1544px;height:995px">
<div style="left:773px;top:533px;width:770px;height:55px;background:linear-gradient(#7c7c7c 0%,#858585 14%,#989898 32%,#aeaeae 50%,#c1c1c1 68%,#cdcdcd 85%,#d3d3d3 100%);"></div>
<div style="left:773px;top:588px;width:770px;height:1px;background:#9d9d9d"></div>
<div style="left:773px;top:533px;width:770px;height:1px;background:rgba(255,255,255,.10)"></div>
<div style="left:1521px;top:534px;width:22px;height:54px;background:radial-gradient(ellipse 22px 52px at 100% 6px,rgba(255,255,255,.32),rgba(255,255,255,0))"></div>
<div style="left:781px;top:539px;width:12px;height:12px;border-radius:50%;border:1px solid #6f6f6f;background:linear-gradient(#8d8d8d,#a3a3a3)"></div>
<div style="left:801px;top:539px;width:12px;height:12px;border-radius:50%;border:1px solid #6f6f6f;background:linear-gradient(#8d8d8d,#a3a3a3)"></div>
<div style="left:821px;top:539px;width:12px;height:12px;border-radius:50%;border:1px solid #6f6f6f;background:linear-gradient(#8d8d8d,#a3a3a3)"></div>
<div class="fb" style="left:781px;top:558px;width:53px;height:22px;"><div style="left:25.3px;top:2px;width:1px;height:16px;background:rgba(0,0,0,.08)"></div><svg style="left:8px;top:5px" width="10" height="10" viewBox="0 0 10 10"><path d="M8.5 .8 V9.2 L1 5Z" fill="#a0a0a0" stroke="#8a8a8a" stroke-width=".6"/></svg><svg style="left:33px;top:5px" width="10" height="10" viewBox="0 0 10 10"><path d="M1.5 .8 V9.2 L9 5Z" fill="#a0a0a0" stroke="#8a8a8a" stroke-width=".6"/></svg></div>
<div class="fb" style="left:932px;top:558px;width:112px;height:22px;"><div style="left:-1px;top:-1px;width:30px;height:22px;border-radius:4px 0 0 4px;background:linear-gradient(#8f8f8f,#a6a6a6);box-shadow:inset 1px 1px 2px rgba(0,0,0,.3)"></div><div style="left:54.3px;top:2px;width:1px;height:16px;background:rgba(0,0,0,.13)"></div><div style="left:81.8px;top:2px;width:1px;height:16px;background:rgba(0,0,0,.13)"></div><svg style="left:8.8px;top:5.1px" width="12" height="11" viewBox="0 0 12 11"><path d="M.5 .5h3v3h-3zM7.8 .5h3v3h-3zM.5 6.6h3v3h-3zM7.8 6.6h3v3h-3z" fill="#7a7a7a" stroke="#f4f4f4" stroke-width="1"/></svg><svg style="left:36.7px;top:5px" width="12" height="12" viewBox="0 0 12 12"><path d="M0 1.5H12M0 4.5H12M0 7.5H12M0 10.5H12" stroke="#6e6e6e" stroke-width="1.1"/></svg><svg style="left:63px;top:4.8px" width="13" height="11" viewBox="0 0 13 11"><path d="M.6 .6H12.4V10.4H.6ZM4.5 .6V10.4M8.5 .6V10.4" fill="none" stroke="#6e6e6e" stroke-width="1.1"/></svg><svg style="left:88.6px;top:5px" width="16" height="11" viewBox="0 0 16 11"><path d="M.6 .3V10.7M2.7 1.2V9.8M12.7 1.2V9.8M14.8 .3V10.7" stroke="#6e6e6e" stroke-width="1"/><rect x="4.4" y="1.2" width="6.6" height="8.6" fill="#858585"/></svg></div>
<div class="fb" style="left:1052.2px;top:558px;width:39.6px;height:21.6px;"><svg style="left:5.4px;top:2.6px" width="15" height="15" viewBox="0 0 15 15"><g stroke="#6e6e6e" stroke-width="2.5"><path d="M7.5 .5V14.5M.5 7.5H14.5M2.55 2.55L12.45 12.45M12.45 2.55L2.55 12.45"/></g><circle cx="7.5" cy="7.5" r="4.7" fill="#6e6e6e"/><circle cx="7.5" cy="7.5" r="2.4" fill="#c4c4c4"/></svg><svg style="left:25.6px;top:8px" width="8" height="6" viewBox="0 0 8 6"><path d="M.5 .5H7.5L4 5.5Z" fill="#8e8e8e"/></svg></div>
<div class="fb" style="left:1100.1px;top:558px;width:39.5px;height:21.6px;"><svg style="left:5.2px;top:2.2px" width="17.4" height="16.2" viewBox="0 0 19 17"><path d="M5.2 1 L9.5 3.8 L5.2 6.6 L1 3.8Z M13.8 1 L18 3.8 L13.8 6.6 L9.5 3.8Z M5.2 6.6 L9.5 9.4 L5.2 12.2 L1 9.4Z M13.8 6.6 L18 9.4 L13.8 12.2 L9.5 9.4Z M5.2 13.2 L9.5 10.4 L13.8 13.2 L9.5 16Z" fill="#6e6e6e"/></svg><svg style="left:25px;top:8px" width="8" height="6" viewBox="0 0 8 6"><path d="M.5 .5H7.5L4 5.5Z" fill="#8e8e8e"/></svg></div>
<div class="fb" style="left:1148px;top:558px;width:39.6px;height:21.6px;"><svg style="left:7.6px;top:4.7px" width="12" height="12" viewBox="0 0 12 12"><path d="M0 .6H11.6M0 6.6H11.6" stroke="#6e6e6e" stroke-width="1.1"/><path d="M.5 2.6h2.4v2h-2.4zM4.6 2.6h2.4v2h-2.4zM8.7 2.6h2.4v2h-2.4zM.5 8.7h2.4v2h-2.4zM4.6 8.7h2.4v2h-2.4zM8.7 8.7h2.4v2h-2.4z" fill="none" stroke="#6e6e6e" stroke-width="1"/></svg><svg style="left:25px;top:8px" width="8" height="6" viewBox="0 0 8 6"><path d="M.5 .5H7.5L4 5.5Z" fill="#8e8e8e"/></svg></div>
<div class="fb" style="left:1196px;top:558px;width:39.5px;height:21.6px;"><svg style="left:11.5px;top:2.4px" width="17.5" height="14" viewBox="0 0 17 14"><path d="M6 4.5H1.5V13H12.5V9.5" fill="none" stroke="#a2a2a2" stroke-width="1.4"/><path d="M4.5 10.5Q5 5 10.5 4.6V1.5L16 6.2L10.5 10.5V7.6Q6.5 7.6 4.5 10.5Z" fill="#a2a2a2"/></svg></div>
<div class="fb" style="left:1243.9px;top:558px;width:39.5px;height:21.6px;"><div style="left:9px;top:4.8px;width:20px;height:10px;border-radius:5px;background:#9b9b9b;box-shadow:inset 0 1px 1px rgba(0,0,0,.25)"></div><div style="left:11.5px;top:7.3px;width:5px;height:5px;border-radius:50%;background:#d4d4d4"></div></div>
<div style="left:1352.5px;top:558px;width:182.5px;height:22px;border:1px solid #8e8e8e;border-radius:11px;background:linear-gradient(#b0b0b0,#c9c9c9 35%,#dedede 75%,#e4e4e4);box-shadow:0 1px 0 rgba(255,255,255,.3)"><svg style="left:5px;top:4px" width="14" height="14" viewBox="0 0 14 14"><circle cx="5.2" cy="5.2" r="3.5" fill="none" stroke="#777" stroke-width="1.6"/><path d="M7.9 7.9L11.6 11.6" stroke="#777" stroke-width="2" stroke-linecap="round"/></svg></div>
<svg style="left:1525px;top:538px" width="15" height="15" viewBox="0 0 15 15"><path d="M8.5 .5H14.5V6.5L12.3 4.3L9.2 7.4L7.6 5.8L10.7 2.7ZM6.5 14.5H.5V8.5L2.7 10.7L5.8 7.6L7.4 9.2L4.3 12.3Z" fill="#6b6b6b"/></svg>
<svg style="left:1108.2px;top:538.3px" width="15.8" height="13.5" viewBox="0 0 17 14" preserveAspectRatio="none"><path d="M.5 2Q.5 .5 2 .5H6L7.2 2.200H15Q16.500 2.200 16.500 3.700V12Q16.500 13.500 15 13.500H2Q.5 13.500 .5 12Z" fill="#5d6f82"/><path d="M1.100 3.800H15.900V12Q15.900 12.900 15 12.900H2Q1.100 12.900 1.100 12Z" fill="#6c8093"/><path d="M1.100 4.200H15.900" stroke="#7d90a3" stroke-width=".7"/></svg>
<div class="t" style="left:1128.50px;top:536.10px;font-size:13px;line-height:17px;color:#474747;letter-spacing:0.179px;text-shadow:0 1px 0 rgba(255,255,255,.22);">processados</div>
<div style="left:773px;top:589px;width:140px;height:404px;background:linear-gradient(#f5f5f5,#ededed 60px,#ebebeb)"></div>
<div style="left:912.5px;top:589px;width:15px;height:404px;background:linear-gradient(90deg,#e4e4e4,#f1f1f1 40%,#f6f6f6);border-left:1px solid #dcdcdc;border-right:1px solid #bdbdbd"></div>
<div style="left:916.5px;top:592.5px;width:7.5px;height:266px;background:#c1c1c1;border-radius:4px"></div>
<div class="t" style="left:782.60px;top:593.89px;font-size:11px;line-height:15px;color:#727989;letter-spacing:0.344px;font-weight:700;text-shadow:0 1px 0 #fff;">FAVORITOS</div>
<svg style="left:790.5px;top:613px" width="19" height="18" viewBox="0 0 19 18"><path d="M5 .6 L9.5 3.5 L5 6.4 L.5 3.5Z M14 .6 L18.5 3.5 L14 6.4 L9.5 3.5Z M5 6.4 L9.5 9.3 L5 12.2 L.5 9.3Z M14 6.4 L18.5 9.3 L14 12.2 L9.5 9.3Z" fill="#7a7f89"/><path d="M5 13.1 L9.5 10.2 L14 13.1 L15.6 12.1 V13.8 L9.5 17.4 L3.4 13.8 V12.1Z" fill="#7a7f89"/></svg>
<div class="t" style="left:815.20px;top:613.80px;font-size:13px;line-height:17px;color:#000;letter-spacing:0.893px;">Dropbox</div>
<svg style="left:790.5px;top:637.7px" width="19" height="17" viewBox="0 0 19 17"><path d="M1 3.2 Q1 1.6 2.4 1.4 L6.6 1 Q7.6 1 8 1.7 L8.7 2.9 H16.6 Q18 2.9 18 4.3 V6 H1Z" fill="#c2c5ca" stroke="#858992" stroke-width=".9"/><path d="M.7 4.9 H18.3 V14 Q18.3 15.4 16.9 15.4 H2.1 Q.7 15.4 .7 14Z" fill="url(#sfg)" stroke="#7b7f89" stroke-width=".9"/><path d="M1.3 5.6H17.7" stroke="#eceef0" stroke-width=".8"/></svg>
<div class="t" style="left:815.20px;top:637.80px;font-size:13px;line-height:17px;color:#000;letter-spacing:0.421px;">Google Drive</div>
<svg style="left:790.5px;top:661px" width="19" height="18" viewBox="0 0 19 18"><path d="M.8 8 Q.8 .8 9.5 .8 Q18.2 .8 18.2 8 Z" fill="#9095a0" stroke="#7a7f89" stroke-width=".9"/><path d="M4.4 7.8 Q5 2 9.5 1 Q14 2 14.6 7.8" fill="#b9bdc5" stroke="#7a7f89" stroke-width=".8"/><path d="M7.8 7.8 Q8 3 9.5 1 Q11 3 11.2 7.8" fill="#9a9fa9" stroke="#7a7f89" stroke-width=".6"/><path d="M1.2 8.2 L7.6 13.2 M17.8 8.2 L11.4 13.2 M5.4 8.2 L8.6 13 M13.6 8.2 L10.4 13" stroke="#7a7f89" stroke-width="1"/><rect x="7" y="12.6" width="5" height="2.8" fill="#7a7f89"/><rect x="5.2" y="15.6" width="8.6" height="1.9" fill="#7a7f89"/></svg>
<div class="t" style="left:815.20px;top:661.80px;font-size:13px;line-height:17px;color:#000;letter-spacing:0.739px;">AirDrop</div>
<svg style="left:790.5px;top:685px" width="19" height="18" viewBox="0 0 19 18"><path d="M9.6 .8 L2.6 16.6 L4.6 17.3 L10.2 4 Z" fill="#7a7f89"/><path d="M9.2 .8 L16.8 16.4 L14.6 17.4 L8 3.4Z" fill="#7a7f89"/><path d="M.6 10 H18.4 V13.4 H17 V11.6 H2 V13.4 H.6Z" fill="#7a7f89"/><path d="M5.6 11.6H13.6" stroke="#c5c8ce" stroke-width="1.2"/></svg>
<div class="t" style="left:815.20px;top:685.80px;font-size:13px;line-height:17px;color:#000;letter-spacing:0.486px;">Aplicativos</div>
<svg style="left:790.5px;top:709px" width="19" height="18" viewBox="0 0 19 18"><rect x=".9" y="1.6" width="17.2" height="14.6" rx="1.6" fill="#d5d7dc" stroke="#7a7f89" stroke-width="1.1"/><rect x="1.6" y="4" width="15.8" height="7.4" fill="#eceef1"/><path d="M3.4 11.2 H15.6 L17.4 15.5 H1.6Z" fill="#7a7f89"/><rect x="5.2" y="12.6" width="1.9" height="1.7" fill="#f4f4f6"/><rect x="8.6" y="12.6" width="1.9" height="1.7" fill="#f4f4f6"/><rect x="12" y="12.6" width="1.9" height="1.7" fill="#f4f4f6"/></svg>
<div class="t" style="left:815.20px;top:709.80px;font-size:13px;line-height:17px;color:#000;letter-spacing:-0.263px;">Mesa</div>
<svg style="left:790.5px;top:733px" width="19" height="18" viewBox="0 0 19 18"><path d="M7 .8 H13.6 L17.6 4.8 V14.6 H7Z" fill="#c9ccd2" stroke="#7a7f89" stroke-width="1"/><path d="M13.4 .8 V5 H17.6Z" fill="#eceef1" stroke="#7a7f89" stroke-width=".9"/><path d="M1.6 3.8 H7.8 L11.6 7.6 V17.2 H1.6Z" fill="#dadce1" stroke="#7a7f89" stroke-width="1"/><path d="M7.6 3.8 V7.8 H11.6Z" fill="#f2f3f5" stroke="#7a7f89" stroke-width=".9"/></svg>
<div class="t" style="left:815.20px;top:733.80px;font-size:13px;line-height:17px;color:#000;letter-spacing:0.613px;">Documentos</div>
<svg style="left:790.5px;top:757.7px" width="19" height="17" viewBox="0 0 19 17"><path d="M1 3.2 Q1 1.6 2.4 1.4 L6.6 1 Q7.6 1 8 1.7 L8.7 2.9 H16.6 Q18 2.9 18 4.3 V6 H1Z" fill="#c2c5ca" stroke="#858992" stroke-width=".9"/><path d="M.7 4.9 H18.3 V14 Q18.3 15.4 16.9 15.4 H2.1 Q.7 15.4 .7 14Z" fill="url(#sfg)" stroke="#7b7f89" stroke-width=".9"/><path d="M1.3 5.6H17.7" stroke="#eceef0" stroke-width=".8"/></svg>
<div class="t" style="left:815.20px;top:757.80px;font-size:13px;line-height:17px;color:#000;letter-spacing:0.690px;">alx</div>
<svg style="left:790.5px;top:781.7px" width="19" height="17" viewBox="0 0 19 17"><path d="M1 3.2 Q1 1.6 2.4 1.4 L6.6 1 Q7.6 1 8 1.7 L8.7 2.9 H16.6 Q18 2.9 18 4.3 V6 H1Z" fill="#c2c5ca" stroke="#858992" stroke-width=".9"/><path d="M.7 4.9 H18.3 V14 Q18.3 15.4 16.9 15.4 H2.1 Q.7 15.4 .7 14Z" fill="url(#sfg)" stroke="#7b7f89" stroke-width=".9"/><path d="M1.3 5.6H17.7" stroke="#eceef0" stroke-width=".8"/></svg>
<div class="t" style="left:815.20px;top:781.80px;font-size:13px;line-height:17px;color:#000;letter-spacing:0.419px;">referencias</div>
<svg style="left:790.5px;top:805px" width="19" height="18" viewBox="0 0 19 18"><circle cx="9.5" cy="9" r="8.9" fill="#7a7f89"/><path d="M7.1 3.6 H11.9 V8.8 H15.2 L9.5 14.9 L3.8 8.8 H7.1Z" fill="#f6f6f8"/></svg>
<div class="t" style="left:815.20px;top:805.80px;font-size:13px;line-height:17px;color:#000;letter-spacing:0.308px;">Transferências</div>
<svg style="left:790.5px;top:829px" width="19" height="18" viewBox="0 0 19 18"><rect x="1.6" y=".8" width="15.8" height="16.4" fill="#dfe1e5" stroke="#7a7f89" stroke-width="1.1"/><rect x="5" y="1.6" width="9" height="6.8" fill="#c4c7cd" stroke="#7a7f89" stroke-width=".9"/><rect x="5" y="9.6" width="9" height="6.8" fill="#d3d6db" stroke="#7a7f89" stroke-width=".9"/><path d="M2.4 3H4M2.4 5.8H4M2.4 8.6H4M2.4 11.4H4M2.4 14.2H4M15 3H16.6M15 5.8H16.6M15 8.6H16.6M15 11.4H16.6M15 14.2H16.6" stroke="#7a7f89" stroke-width="1.5"/></svg>
<div class="t" style="left:815.20px;top:829.80px;font-size:13px;line-height:17px;color:#000;letter-spacing:0.244px;">Filmes</div>
<svg style="left:790.5px;top:853px" width="19" height="18" viewBox="0 0 19 18"><path d="M5.8 3.4 L16.4 .6 V12.6 A3 2.5 -15 1 1 14.3 10.2 V4.6 L7.9 6.3 V14.6 A3 2.5 -15 1 1 5.8 12.2Z" fill="#7a7f89"/></svg>
<div class="t" style="left:815.20px;top:853.80px;font-size:13px;line-height:17px;color:#000;letter-spacing:0.264px;">Música</div>
<svg style="left:790.5px;top:877px" width="19" height="18" viewBox="0 0 19 18"><path d="M.8 5.6 Q.8 4 2.4 4 H5.2 L6.4 1.9 H12.6 L13.8 4 H16.6 Q18.2 4 18.2 5.6 V14.4 Q18.2 16 16.6 16 H2.4 Q.8 16 .8 14.4Z" fill="#a2a6af" stroke="#7a7f89" stroke-width="1"/><circle cx="9.5" cy="9.8" r="4.6" fill="#f4f5f6" stroke="#7a7f89" stroke-width=".9"/><circle cx="9.5" cy="9.8" r="2.4" fill="#8b9099"/></svg>
<div class="t" style="left:815.20px;top:877.80px;font-size:13px;line-height:17px;color:#000;letter-spacing:0.356px;">Imagens</div>
<svg style="left:790.5px;top:901.7px" width="19" height="17" viewBox="0 0 19 17"><path d="M1 3.2 Q1 1.6 2.4 1.4 L6.6 1 Q7.6 1 8 1.7 L8.7 2.9 H16.6 Q18 2.9 18 4.3 V6 H1Z" fill="#c2c5ca" stroke="#858992" stroke-width=".9"/><path d="M.7 4.9 H18.3 V14 Q18.3 15.4 16.9 15.4 H2.1 Q.7 15.4 .7 14Z" fill="url(#sfg)" stroke="#7b7f89" stroke-width=".9"/><path d="M1.3 5.6H17.7" stroke="#eceef0" stroke-width=".8"/></svg>
<div class="t" style="left:815.20px;top:901.80px;font-size:13px;line-height:17px;color:#000;letter-spacing:-0.226px;">Sites</div>
<div class="t" style="left:782.60px;top:932.89px;font-size:11px;line-height:15px;color:#727989;letter-spacing:0.243px;font-weight:700;text-shadow:0 1px 0 #fff;">DISPOSITIVOS</div>
<svg style="left:790.5px;top:952px" width="19" height="18" viewBox="0 0 19 18"><circle cx="9.5" cy="9" r="8.6" fill="url(#dsg)" stroke="#858992" stroke-width="1"/><path d="M9.5 9 L2.6 4 A8.5 8.5 0 0 1 8 .6Z M9.5 9 L16.4 14 A8.5 8.5 0 0 1 11 17.4Z" fill="#f2f3f5" opacity=".6"/><circle cx="9.5" cy="9" r="4.3" fill="none" stroke="#9a9ea7" stroke-width="1.1"/><circle cx="9.5" cy="9" r="1.9" fill="#f6f6f8" stroke="#8f939c" stroke-width=".9"/></svg>
<div class="t" style="left:815.20px;top:953.00px;font-size:13px;line-height:17px;color:#000;letter-spacing:0.396px;">Disco Remoto</div>
<div class="t" style="left:782.60px;top:982.89px;font-size:11px;line-height:15px;color:#727989;letter-spacing:0.208px;font-weight:700;text-shadow:0 1px 0 #fff;">ETIQUETAS</div>
<div style="left:928px;top:589px;width:615px;height:8px;background:linear-gradient(#f1f1f1,#fff)"></div>
<div style="left:980.75px;top:599.75px;width:58.5px;height:58.5px;background:#fff;box-shadow:0 0 0 .5px rgba(0,0,0,.10),0 1px 2.5px rgba(0,0,0,.5);"></div>
<div style="left:983.75px;top:602.75px;width:52.5px;height:52.5px;background:#f6f6ee;border:1px solid #bcbcb1;overflow:hidden"><svg style="left:-1px;top:-1px" width="52" height="52"><path d="M36.5 21h5v3h-5z" fill="#8894aa" opacity=".45"/><path d="M36 24.2l2.5-3.6h3.6M36.5 23.8h5" stroke="#e4707a" stroke-width=".8" fill="none" opacity=".8"/><path d="M37.5 23.4l2.6-2.4" stroke="#55607a" stroke-width=".7" opacity=".8"/></svg></div>
<div class="t" style="left:991.95px;top:666.84px;font-size:12px;line-height:16px;color:#000;letter-spacing:0.761px;">17.jpg</div>
<div class="t" style="left:985.60px;top:680.69px;font-size:11px;line-height:15px;color:#3f7ad6;letter-spacing:-0.277px;">256</div>
<div class="t" style="left:1005.81px;top:679.75px;font-size:14px;line-height:16px;color:#3f7ad6;">×</div>
<div class="t" style="left:1016.30px;top:680.69px;font-size:11px;line-height:15px;color:#3f7ad6;letter-spacing:-0.277px;">256</div>
<div style="left:1125.75px;top:599.75px;width:58.5px;height:58.5px;background:#fff;box-shadow:0 0 0 .5px rgba(0,0,0,.10),0 1px 2.5px rgba(0,0,0,.5);"></div>
<div style="left:1128.75px;top:602.75px;width:52.5px;height:52.5px;background:#f6f6ee;border:1px solid #bcbcb1;overflow:hidden"><svg style="left:-1px;top:-1px" width="52" height="52"><path d="M22.5 41.5h9v5.5h-9z" fill="#a9b0c0" opacity=".45"/><path d="M20.5 47.5l3-6h8.5l.8 6.2h-12M31 42l2 5" stroke="#ea727a" stroke-width=".8" fill="none" opacity=".75"/><path d="M23 46.5l4.5-4.5" stroke="#5a6680" stroke-width=".8" opacity=".7"/></svg></div>
<div class="t" style="left:1136.95px;top:666.84px;font-size:12px;line-height:16px;color:#000;letter-spacing:0.761px;">34.jpg</div>
<div class="t" style="left:1130.60px;top:680.69px;font-size:11px;line-height:15px;color:#3f7ad6;letter-spacing:-0.277px;">256</div>
<div class="t" style="left:1150.81px;top:679.75px;font-size:14px;line-height:16px;color:#3f7ad6;">×</div>
<div class="t" style="left:1161.30px;top:680.69px;font-size:11px;line-height:15px;color:#3f7ad6;letter-spacing:-0.277px;">256</div>
<div style="left:1270.75px;top:599.75px;width:58.5px;height:58.5px;background:#fff;box-shadow:0 0 0 .5px rgba(0,0,0,.10),0 1px 2.5px rgba(0,0,0,.5);"></div>
<div style="left:1273.75px;top:602.75px;width:52.5px;height:52.5px;background:#f6f6ee;border:1px solid #bcbcb1;overflow:hidden"><svg style="left:-1px;top:-1px" width="52" height="52"><path d="M1 32h7v8.5h-7z" fill="#c9ccd2" opacity=".35"/><path d="M0 30h6q2.6 .4 2.8 3l-.3 5l.2 3.800M0 40.800h9.200l2.800-2.600M8.800 41l-.2 2.400" stroke="#ef6f76" stroke-width=".9" fill="none" opacity=".7"/><path d="M0 32.600h2.500M.4 34v4M.4 44v2" stroke="#56627c" stroke-width=".9" opacity=".8"/><path d="M11 32l2 1l3 5M9 44l3 2l2-1.400l2 1" stroke="#c9c9cf" stroke-width=".5" fill="none"/></svg></div>
<div class="t" style="left:1281.95px;top:666.84px;font-size:12px;line-height:16px;color:#000;letter-spacing:0.761px;">69.jpg</div>
<div class="t" style="left:1275.60px;top:680.69px;font-size:11px;line-height:15px;color:#3f7ad6;letter-spacing:-0.277px;">256</div>
<div class="t" style="left:1295.81px;top:679.75px;font-size:14px;line-height:16px;color:#3f7ad6;">×</div>
<div class="t" style="left:1306.30px;top:680.69px;font-size:11px;line-height:15px;color:#3f7ad6;letter-spacing:-0.277px;">256</div>
<div style="left:1415.75px;top:599.75px;width:58.5px;height:58.5px;background:#fff;box-shadow:0 0 0 .5px rgba(0,0,0,.10),0 1px 2.5px rgba(0,0,0,.5);"></div>
<div style="left:1418.75px;top:602.75px;width:52.5px;height:52.5px;background:#f6f6ee;border:1px solid #bcbcb1;overflow:hidden"></div>
<div class="t" style="left:1423.20px;top:666.84px;font-size:12px;line-height:16px;color:#000;letter-spacing:0.772px;">138.jpg</div>
<div class="t" style="left:1420.60px;top:680.69px;font-size:11px;line-height:15px;color:#3f7ad6;letter-spacing:-0.277px;">256</div>
<div class="t" style="left:1440.81px;top:679.75px;font-size:14px;line-height:16px;color:#3f7ad6;">×</div>
<div class="t" style="left:1451.30px;top:680.69px;font-size:11px;line-height:15px;color:#3f7ad6;letter-spacing:-0.277px;">256</div>
<div style="left:980.75px;top:727.75px;width:58.5px;height:58.5px;background:#fff;box-shadow:0 0 0 .5px rgba(0,0,0,.10),0 1px 2.5px rgba(0,0,0,.5);"></div>
<div style="left:983.75px;top:730.75px;width:52.5px;height:52.5px;background:#f6f6ee;border:1px solid #bcbcb1;overflow:hidden"><svg style="left:-1px;top:-1px" width="52" height="52"><path d="M2.500 12.500h12.500l1.500 3l-.5 6l-.500 8h-13z" fill="#d7d8da" opacity=".3"/><path d="M1.500 17.500q1.500 2 1 5" stroke="#b9d7ec" stroke-width="1.300" fill="none"/><path d="M0 8.200h13.500q1.500 .3 1.400 2.300M17.700 11.800l.2 4.700l-1.800 4.500l-.6 4.500l2 3v6.200M0 29.300h18.200M17.800 28.600l4.200-1.600l2.600-3" stroke="#ef6f76" stroke-width=".95" fill="none" opacity=".72"/><path d="M0 14.500q2.500-2.500 6-3.200l9.200-.9" stroke="#5b708a" stroke-width="1" fill="none" opacity=".75"/><path d="M15.400 10h3.200v2.200h-3.200z" fill="#a5a8ad" opacity=".8"/><path d="M20 12l3.500-3M21 13l5 5l6 7.500M18.500 36l5.500 5l4-4l4.500 3.500M5 31l2 8M10 30l4 7" stroke="#d2d2d4" stroke-width=".6" fill="none"/><path d="M.8 6l1 .3" stroke="#e4b460" stroke-width=".9"/></svg></div>
<div class="t" style="left:988.20px;top:794.84px;font-size:12px;line-height:16px;color:#000;letter-spacing:0.772px;">139.jpg</div>
<div class="t" style="left:985.60px;top:808.69px;font-size:11px;line-height:15px;color:#3f7ad6;letter-spacing:-0.277px;">256</div>
<div class="t" style="left:1005.81px;top:807.75px;font-size:14px;line-height:16px;color:#3f7ad6;">×</div>
<div class="t" style="left:1016.30px;top:808.69px;font-size:11px;line-height:15px;color:#3f7ad6;letter-spacing:-0.277px;">256</div>
<div style="left:1125.75px;top:727.75px;width:58.5px;height:58.5px;background:#fff;box-shadow:0 0 0 .5px rgba(0,0,0,.10),0 1px 2.5px rgba(0,0,0,.5);"></div>
<div style="left:1128.75px;top:730.75px;width:52.5px;height:52.5px;background:#f6f6ee;border:1px solid #bcbcb1;overflow:hidden"></div>
<div class="t" style="left:1133.20px;top:794.84px;font-size:12px;line-height:16px;color:#000;letter-spacing:0.772px;">277.jpg</div>
<div class="t" style="left:1130.60px;top:808.69px;font-size:11px;line-height:15px;color:#3f7ad6;letter-spacing:-0.277px;">256</div>
<div class="t" style="left:1150.81px;top:807.75px;font-size:14px;line-height:16px;color:#3f7ad6;">×</div>
<div class="t" style="left:1161.30px;top:808.69px;font-size:11px;line-height:15px;color:#3f7ad6;letter-spacing:-0.277px;">256</div>
<div style="left:1270.75px;top:727.75px;width:58.5px;height:58.5px;background:#fff;box-shadow:0 0 0 .5px rgba(0,0,0,.10),0 1px 2.5px rgba(0,0,0,.5);"></div>
<div style="left:1273.75px;top:730.75px;width:52.5px;height:52.5px;background:#f6f6ee;border:1px solid #bcbcb1;overflow:hidden"><svg style="left:-1px;top:-1px" width="52" height="52"><path d="M4 34L10 44L9 52M10 44L16 46" stroke="#e6e5da" stroke-width="1" fill="none"/></svg></div>
<div class="t" style="left:1278.20px;top:794.84px;font-size:12px;line-height:16px;color:#000;letter-spacing:0.772px;">278.jpg</div>
<div class="t" style="left:1275.60px;top:808.69px;font-size:11px;line-height:15px;color:#3f7ad6;letter-spacing:-0.277px;">256</div>
<div class="t" style="left:1295.81px;top:807.75px;font-size:14px;line-height:16px;color:#3f7ad6;">×</div>
<div class="t" style="left:1306.30px;top:808.69px;font-size:11px;line-height:15px;color:#3f7ad6;letter-spacing:-0.277px;">256</div>
<div style="left:1415.75px;top:727.75px;width:58.5px;height:58.5px;background:#fff;box-shadow:0 0 0 .5px rgba(0,0,0,.10),0 1px 2.5px rgba(0,0,0,.5);"></div>
<div style="left:1418.75px;top:730.75px;width:52.5px;height:52.5px;background:#f6f6ee;border:1px solid #bcbcb1;overflow:hidden"><svg style="left:-1px;top:-1px" width="52" height="52"><path d="M2 44L14 50" stroke="#e4e3d8" stroke-width="1" fill="none"/></svg></div>
<div class="t" style="left:1423.20px;top:794.84px;font-size:12px;line-height:16px;color:#000;letter-spacing:0.772px;">279.jpg</div>
<div class="t" style="left:1420.60px;top:808.69px;font-size:11px;line-height:15px;color:#3f7ad6;letter-spacing:-0.277px;">256</div>
<div class="t" style="left:1440.81px;top:807.75px;font-size:14px;line-height:16px;color:#3f7ad6;">×</div>
<div class="t" style="left:1451.30px;top:808.69px;font-size:11px;line-height:15px;color:#3f7ad6;letter-spacing:-0.277px;">256</div>
<div style="left:980.75px;top:855.75px;width:58.5px;height:58.5px;background:#fff;box-shadow:0 0 0 .5px rgba(0,0,0,.10),0 1px 2.5px rgba(0,0,0,.5);"></div>
<div style="left:983.75px;top:858.75px;width:52.5px;height:52.5px;background:#f6f6ee;border:1px solid #bcbcb1;overflow:hidden"></div>
<div class="t" style="left:988.20px;top:922.84px;font-size:12px;line-height:16px;color:#000;letter-spacing:0.772px;">555.jpg</div>
<div class="t" style="left:985.60px;top:936.69px;font-size:11px;line-height:15px;color:#3f7ad6;letter-spacing:-0.277px;">256</div>
<div class="t" style="left:1005.81px;top:935.75px;font-size:14px;line-height:16px;color:#3f7ad6;">×</div>
<div class="t" style="left:1016.30px;top:936.69px;font-size:11px;line-height:15px;color:#3f7ad6;letter-spacing:-0.277px;">256</div>
<div style="left:1125.75px;top:855.75px;width:58.5px;height:58.5px;background:#fff;box-shadow:0 0 0 .5px rgba(0,0,0,.10),0 1px 2.5px rgba(0,0,0,.5);"></div>
<div style="left:1128.75px;top:858.75px;width:52.5px;height:52.5px;background:#f6f6ee;border:1px solid #bcbcb1;overflow:hidden"></div>
<div class="t" style="left:1133.20px;top:922.84px;font-size:12px;line-height:16px;color:#000;letter-spacing:0.772px;">556.jpg</div>
<div class="t" style="left:1130.60px;top:936.69px;font-size:11px;line-height:15px;color:#3f7ad6;letter-spacing:-0.277px;">256</div>
<div class="t" style="left:1150.81px;top:935.75px;font-size:14px;line-height:16px;color:#3f7ad6;">×</div>
<div class="t" style="left:1161.30px;top:936.69px;font-size:11px;line-height:15px;color:#3f7ad6;letter-spacing:-0.277px;">256</div>
<div style="left:1270.75px;top:855.75px;width:58.5px;height:58.5px;background:#fff;box-shadow:0 0 0 .5px rgba(0,0,0,.10),0 1px 2.5px rgba(0,0,0,.5);"></div>
<div style="left:1273.75px;top:858.75px;width:52.5px;height:52.5px;background:#f6f6ee;border:1px solid #bcbcb1;overflow:hidden"></div>
<div class="t" style="left:1278.20px;top:922.84px;font-size:12px;line-height:16px;color:#000;letter-spacing:0.772px;">557.jpg</div>
<div class="t" style="left:1275.60px;top:936.69px;font-size:11px;line-height:15px;color:#3f7ad6;letter-spacing:-0.277px;">256</div>
<div class="t" style="left:1295.81px;top:935.75px;font-size:14px;line-height:16px;color:#3f7ad6;">×</div>
<div class="t" style="left:1306.30px;top:936.69px;font-size:11px;line-height:15px;color:#3f7ad6;letter-spacing:-0.277px;">256</div>
<div style="left:1415.75px;top:855.75px;width:58.5px;height:58.5px;background:#fff;box-shadow:0 0 0 .5px rgba(0,0,0,.10),0 1px 2.5px rgba(0,0,0,.5);"></div>
<div style="left:1418.75px;top:858.75px;width:52.5px;height:52.5px;background:#f6f6ee;border:1px solid #bcbcb1;overflow:hidden"></div>
<div class="t" style="left:1423.20px;top:922.84px;font-size:12px;line-height:16px;color:#000;letter-spacing:0.772px;">558.jpg</div>
<div class="t" style="left:1420.60px;top:936.69px;font-size:11px;line-height:15px;color:#3f7ad6;letter-spacing:-0.277px;">256</div>
<div class="t" style="left:1440.81px;top:935.75px;font-size:14px;line-height:16px;color:#3f7ad6;">×</div>
<div class="t" style="left:1451.30px;top:936.69px;font-size:11px;line-height:15px;color:#3f7ad6;letter-spacing:-0.277px;">256</div>
<div style="left:980.75px;top:983.75px;width:58.5px;height:58.5px;background:#fff;box-shadow:0 0 0 .5px rgba(0,0,0,.10),0 1px 2.5px rgba(0,0,0,.5);"></div>
<div style="left:983.75px;top:986.75px;width:52.5px;height:52.5px;background:#f6f6ee;border:1px solid #bcbcb1;overflow:hidden"></div>
<div style="left:1125.75px;top:983.75px;width:58.5px;height:58.5px;background:#fff;box-shadow:0 0 0 .5px rgba(0,0,0,.10),0 1px 2.5px rgba(0,0,0,.5);"></div>
<div style="left:1128.75px;top:986.75px;width:52.5px;height:52.5px;background:#f6f6ee;border:1px solid #bcbcb1;overflow:hidden"></div>
<div style="left:1270.75px;top:983.75px;width:58.5px;height:58.5px;background:#fff;box-shadow:0 0 0 .5px rgba(0,0,0,.10),0 1px 2.5px rgba(0,0,0,.5);"></div>
<div style="left:1273.75px;top:986.75px;width:52.5px;height:52.5px;background:#f6f6ee;border:1px solid #bcbcb1;overflow:hidden"></div>
<div style="left:1415.75px;top:983.75px;width:58.5px;height:58.5px;background:#fff;box-shadow:0 0 0 .5px rgba(0,0,0,.10),0 1px 2.5px rgba(0,0,0,.5);"></div>
<div style="left:1418.75px;top:986.75px;width:52.5px;height:52.5px;background:#f6f6ee;border:1px solid #bcbcb1;overflow:hidden"></div>
<div style="left:1528px;top:589px;width:15px;height:404px;background:linear-gradient(90deg,#ebebeb,#f6f6f6 40%,#fafafa);border-left:1px solid #e3e3e3"></div>
<div style="left:1532.2px;top:592.2px;width:7.8px;height:17.2px;background:#c1c1c1;border-radius:4px"></div>
</div></div>
<div style="left:0px;top:993px;width:1544px;height:2px;background:#4a4a4a;z-index:0"></div>
<div style="left:1543px;top:534px;width:1px;height:461px;background:#66665e"></div>
<div id="xn" style="left:1px;top:1px;width:1543px;height:530px;background:#ededed;border-radius:5px 5px 4px 4px;overflow:hidden;box-shadow:0 0 0 1px rgba(30,30,30,.3);z-index:5">
<div style="left:-1px;top:-1px;width:1544px;height:531px">
<div style="left:1px;top:1px;width:1543px;height:21px;background:linear-gradient(#e9e9e9,#d6d6d6 45%,#b3b3b3 100%);border-top:1px solid #f2f2f2;"></div>
<div style="left:1px;top:22px;width:1543px;height:1px;background:#757575"></div>
<div style="left:9px;top:5.9px;width:12px;height:12px;border-radius:50%;background:radial-gradient(circle at 50% 88%,#ffc2ba 0%,#f2524e 48%,#cf3636 100%);box-shadow:inset 0 0 0 .8px #8e2222,inset 0 1.5px 1.5px #8e2222,0 1px 0 rgba(255,255,255,.55)"></div>
<div style="left:12.2px;top:7.2px;width:5.6px;height:2.6px;border-radius:50%;background:linear-gradient(rgba(255,255,255,.95),rgba(255,255,255,.25))"></div>
<div style="left:29px;top:5.9px;width:12px;height:12px;border-radius:50%;background:radial-gradient(circle at 50% 88%,#fff0a6 0%,#f3b544 48%,#d9902a 100%);box-shadow:inset 0 0 0 .8px #8f5e14,inset 0 1.5px 1.5px #8f5e14,0 1px 0 rgba(255,255,255,.55)"></div>
<div style="left:32.2px;top:7.2px;width:5.6px;height:2.6px;border-radius:50%;background:linear-gradient(rgba(255,255,255,.95),rgba(255,255,255,.25))"></div>
<div style="left:49px;top:5.9px;width:12px;height:12px;border-radius:50%;background:radial-gradient(circle at 50% 88%,#d6f4b4 0%,#7fcc5c 48%,#55a83c 100%);box-shadow:inset 0 0 0 .8px #2f6e22,inset 0 1.5px 1.5px #2f6e22,0 1px 0 rgba(255,255,255,.55)"></div>
<div style="left:52.2px;top:7.2px;width:5.6px;height:2.6px;border-radius:50%;background:linear-gradient(rgba(255,255,255,.95),rgba(255,255,255,.25))"></div>
<div class="t" style="left:697.50px;top:4.00px;font-size:13px;line-height:17px;color:#3a3a3a;letter-spacing:0.658px;text-shadow:0 1px 0 rgba(255,255,255,.6);">XnConvert – Terminado</div>
<div style="left:12px;top:38px;width:1521px;height:429.5px;background:#e4e4e4;border:1px solid #c6c6c6;border-top-color:#b2b2b2;border-radius:5px;"></div>
<div style="left:480px;top:28px;width:582.5px;height:20.5px;border:1px solid #9b9b9b;border-radius:4px;background:linear-gradient(#ffffff,#f7f7f7 48%,#ececec 52%,#f3f3f3);box-shadow:0 1px 0 rgba(255,255,255,.7);overflow:hidden"><div style="left:329.6px;top:-1px;width:79.2px;height:20.5px;background:linear-gradient(#6c6c6c,#858585 40%,#a6a6a6);box-shadow:inset 0 1px 2px rgba(0,0,0,.45)"></div><div style="left:174.6px;top:2px;width:1px;height:14.5px;background:#c4c4c4"></div><div style="left:272.6px;top:2px;width:1px;height:14.5px;background:#c4c4c4"></div><div style="left:522.6px;top:2px;width:1px;height:14.5px;background:#c4c4c4"></div></div>
<div class="t" style="left:490.50px;top:29.50px;font-size:13px;line-height:17px;color:#000;letter-spacing:0.538px;">Entrada: 39336 arquivos</div>
<div class="t" style="left:669.50px;top:29.50px;font-size:13px;line-height:17px;color:#000;letter-spacing:0.646px;">Ações [0/0]</div>
<div class="t" style="left:767.00px;top:29.50px;font-size:13px;line-height:17px;color:#000;letter-spacing:-0.244px;">Saída</div>
<div class="t" style="left:825.50px;top:29.50px;font-size:13px;line-height:17px;color:#fff;letter-spacing:0.129px;text-shadow:0 -1px 0 rgba(0,0,0,.45);">Situação</div>
<div class="t" style="left:902.00px;top:29.50px;font-size:13px;line-height:17px;color:#000;letter-spacing:0.472px;">Configurações</div>
<div class="t" style="left:1016.50px;top:29.50px;font-size:13px;line-height:17px;color:#000;letter-spacing:0.077px;">Sobre</div>
<div style="left:26px;top:65px;width:1493px;height:341px;background:#fff;border:1px solid #b4b4b4;border-top-color:#8e8e8e;"></div>
<div style="left:1503px;top:66px;width:15px;height:339px;background:linear-gradient(90deg,#efefef,#f6f6f6 40%,#fbfbfb);border-left:1px solid #ebebeb"></div>
<div style="left:1507px;top:386px;width:8px;height:17.8px;background:#c0c0c0;border-radius:4px"></div>
<div class="t" style="left:32.00px;top:66.00px;font-size:13px;line-height:17px;color:#000;letter-spacing:1.105px;">/Users/alx/Desktop/Tiles/15/12152/17901.png</div>
<div class="t" style="left:346.00px;top:66.00px;font-size:13px;line-height:17px;color:#000;letter-spacing:1.017px;">256x256x32</div>
<div class="t" style="left:432.50px;top:66.00px;font-size:13px;line-height:17px;color:#000;">:</div>
<div class="t" style="left:440.00px;top:66.00px;font-size:13px;line-height:17px;color:#000;letter-spacing:0.384px;">Carregado</div>
<div class="t" style="left:32.00px;top:82.00px;font-size:13px;line-height:17px;color:#000;letter-spacing:0.906px;">/Users/alx/Desktop/processados/17901.jpg</div>
<div class="t" style="left:320.50px;top:82.00px;font-size:13px;line-height:17px;color:#000;">:</div>
<div class="t" style="left:327.50px;top:82.00px;font-size:13px;line-height:17px;color:#000;letter-spacing:0.288px;">salvo</div>
<div class="t" style="left:32.00px;top:114.00px;font-size:13px;line-height:17px;color:#000;letter-spacing:1.105px;">/Users/alx/Desktop/Tiles/15/12152/17902.png</div>
<div class="t" style="left:346.00px;top:114.00px;font-size:13px;line-height:17px;color:#000;letter-spacing:1.017px;">256x256x32</div>
<div class="t" style="left:432.50px;top:114.00px;font-size:13px;line-height:17px;color:#000;">:</div>
<div class="t" style="left:440.00px;top:114.00px;font-size:13px;line-height:17px;color:#000;letter-spacing:0.384px;">Carregado</div>
<div class="t" style="left:32.00px;top:130.00px;font-size:13px;line-height:17px;color:#000;letter-spacing:0.906px;">/Users/alx/Desktop/processados/17902.jpg</div>
<div class="t" style="left:320.50px;top:130.00px;font-size:13px;line-height:17px;color:#000;">:</div>
<div class="t" style="left:327.50px;top:130.00px;font-size:13px;line-height:17px;color:#000;letter-spacing:0.288px;">salvo</div>
<div class="t" style="left:32.00px;top:162.00px;font-size:13px;line-height:17px;color:#000;letter-spacing:1.105px;">/Users/alx/Desktop/Tiles/15/12152/17903.png</div>
<div class="t" style="left:346.00px;top:162.00px;font-size:13px;line-height:17px;color:#000;letter-spacing:1.017px;">256x256x32</div>
<div class="t" style="left:432.50px;top:162.00px;font-size:13px;line-height:17px;color:#000;">:</div>
<div class="t" style="left:440.00px;top:162.00px;font-size:13px;line-height:17px;color:#000;letter-spacing:0.384px;">Carregado</div>
<div class="t" style="left:32.00px;top:178.00px;font-size:13px;line-height:17px;color:#000;letter-spacing:0.906px;">/Users/alx/Desktop/processados/17903.jpg</div>
<div class="t" style="left:320.50px;top:178.00px;font-size:13px;line-height:17px;color:#000;">:</div>
<div class="t" style="left:327.50px;top:178.00px;font-size:13px;line-height:17px;color:#000;letter-spacing:0.288px;">salvo</div>
<div class="t" style="left:32.00px;top:210.00px;font-size:13px;line-height:17px;color:#000;letter-spacing:1.105px;">/Users/alx/Desktop/Tiles/15/12152/17904.png</div>
<div class="t" style="left:346.00px;top:210.00px;font-size:13px;line-height:17px;color:#000;letter-spacing:1.017px;">256x256x32</div>
<div class="t" style="left:432.50px;top:210.00px;font-size:13px;line-height:17px;color:#000;">:</div>
<div class="t" style="left:440.00px;top:210.00px;font-size:13px;line-height:17px;color:#000;letter-spacing:0.384px;">Carregado</div>
<div class="t" style="left:32.00px;top:226.00px;font-size:13px;line-height:17px;color:#000;letter-spacing:0.906px;">/Users/alx/Desktop/processados/17904.jpg</div>
<div class="t" style="left:320.50px;top:226.00px;font-size:13px;line-height:17px;color:#000;">:</div>
<div class="t" style="left:327.50px;top:226.00px;font-size:13px;line-height:17px;color:#000;letter-spacing:0.288px;">salvo</div>
<div class="t" style="left:31.00px;top:274.00px;font-size:13px;line-height:17px;color:#000;letter-spacing:0.631px;">Arquivos de entrada: 39336</div>
<div class="t" style="left:31.00px;top:290.00px;font-size:13px;line-height:17px;color:#000;letter-spacing:0.481px;">Páginas extraídas: 39335</div>
<div class="t" style="left:31.00px;top:306.00px;font-size:13px;line-height:17px;color:#000;letter-spacing:0.582px;">Novos arquivos: 259</div>
<div class="t" style="left:31.00px;top:322.00px;font-size:13px;line-height:17px;color:#000;letter-spacing:0.462px;">Sobrescrever: 39076</div>
<div class="t" style="left:31.00px;top:354.00px;font-size:13px;line-height:17px;color:#000;letter-spacing:0.634px;">Duração total: 2 minutos</div>
<div style="left:26px;top:411px;width:1493px;height:18px;border:1px solid #9b9b9b;border-radius:2.5px;background:linear-gradient(#c2d9f6 0%,#a3c7f1 25%,#86b5ed 47%,#5ba2ee 53%,#74b4f1 75%,#b0defa 100%);"></div>
<div class="t" style="left:26.00px;top:436.00px;font-size:13px;line-height:17px;color:#000;letter-spacing:0.663px;">Tempo estimado para terminar:</div>
<div class="t" style="left:233.00px;top:436.00px;font-size:13px;line-height:17px;color:#000;letter-spacing:0.770px;">16:33:07</div>
<div class="t" style="left:843.50px;top:436.00px;font-size:13px;line-height:17px;color:#000;letter-spacing:0.412px;">Faltando:</div>
<div class="t" style="left:1455.50px;top:436.00px;font-size:13px;line-height:17px;color:#000;letter-spacing:0.070px;">Erro (s):</div>
<div class="t" style="left:1511.50px;top:436.00px;font-size:13px;line-height:17px;color:#000;">1</div>
<div style="left:12px;top:478px;width:652.6px;height:33.5px;border:1px solid #aaaaaa;"></div>
<svg style="left:18px;top:485.5px" width="17" height="15" viewBox="0 0 17 15"><defs><linearGradient id="fg1" x1="0" y1="0" x2="0" y2="1"><stop offset="0" stop-color="#fff0a8"/><stop offset="1" stop-color="#eeb94a"/></linearGradient><linearGradient id="ga" x1="0" y1="0" x2="0" y2="1"><stop offset="0" stop-color="#a6f000"/><stop offset="1" stop-color="#4fae10"/></linearGradient></defs><path d="M.9 2 Q.9 .9 2 .9 H5.6 Q6.4 .9 6.8 1.6 L7.2 2.3 H13 Q14 2.3 14 3.3 V12.6 H.9Z" fill="#f2cc6c" stroke="#c8923a" stroke-width=".9"/><path d="M2.9 5.4 Q2.9 4.5 3.8 4.5 H14.8 Q15.7 4.5 15.7 5.4 V12.2 Q15.7 13.2 14.7 13.2 H1.9 Q.9 13.2 .9 12.2 L1.1 12 H2.9Z" fill="url(#fg1)" stroke="#c68c36" stroke-width=".9"/><path d="M7.6 5.2 L10.6 5 L11.1 8.2 L13.2 8 L9.9 13.2 L5.9 8.6 L8 8.4Z" fill="url(#ga)" stroke="#3f9a12" stroke-width=".5"/></svg>
<div style="left:45px;top:484px;width:319px;height:20.5px;border:1px solid #a2a2a2;border-radius:4.5px;background:linear-gradient(#ffffff,#f8f8f8 50%,#ececec);box-shadow:0 1px 0 rgba(255,255,255,.7)"></div>
<svg style="left:350px;top:487px" width="9" height="14" viewBox="0 0 9 14"><path d="M4.5 1.5 L7 5.5 H2Z M4.5 12.5 L7 8.5 H2Z" fill="#3c3c3c"/></svg>
<svg style="left:374.5px;top:486px" width="14" height="14" viewBox="0 0 14 14"><defs><linearGradient id="sv" x1="0" y1="0" x2="0" y2="1"><stop offset="0" stop-color="#a9a9ee"/><stop offset="1" stop-color="#5c5cc8"/></linearGradient><linearGradient id="rx" x1="0" y1="0" x2="0" y2="1"><stop offset="0" stop-color="#ef7f7c"/><stop offset=".5" stop-color="#e04a48"/><stop offset="1" stop-color="#c42c2c"/></linearGradient></defs><path d="M.8 1.4 Q.8 .6 1.6 .6 H11.8 L13.2 1.8 V12.4 Q13.2 13.2 12.4 13.2 H1.6 Q.8 13.2 .8 12.4Z" fill="url(#sv)" stroke="#4c4cb4" stroke-width=".6"/><rect x="3.4" y=".7" width="6.8" height="4.4" fill="#f6f6fc"/><rect x="7.6" y="1.2" width="1.7" height="3" fill="#4a4aa6"/><rect x="2.6" y="6.4" width="8.8" height="6.2" fill="#fdfdff"/><path d="M2.6 12.4H11.4" stroke="#c8c8e0" stroke-width=".6"/></svg>
<svg style="left:407.4px;top:485.8px" width="14" height="14" viewBox="0 0 14 14"><path d="M.9 3.1 L3.1 .9 L7 4.6 L10.9 .9 L13.1 3.1 L9.4 7 L13.1 10.9 L10.9 13.1 L7 9.4 L3.1 13.1 L.9 10.9 L4.6 7Z" fill="url(#rx)" stroke="#b83434" stroke-width=".7" stroke-linejoin="round"/></svg>
<div class="btn" style="left:434px;top:483px;width:224px;height:20.6px;"></div>
<svg style="left:449.5px;top:484.5px" width="15" height="15" viewBox="0 0 15 15"><defs><linearGradient id="gx" x1="0" y1="1" x2="1" y2="0"><stop offset="0" stop-color="#5c9a08"/><stop offset="1" stop-color="#cdea10"/></linearGradient></defs><rect x="1.1" y="2.4" width="9.8" height="11.6" rx=".8" fill="#eef0f4" stroke="#5656a8" stroke-width="1"/><path d="M3.6 7.2 L7.4 4.2 L5.6 1 L13.3 .5 L13 8.2 L10.2 6.6 L6.4 10.2Z" fill="url(#gx)" stroke="#4e8a0a" stroke-width=".5"/></svg>
<div class="t" style="left:470.80px;top:484.60px;font-size:13px;line-height:17px;color:#000;letter-spacing:0.490px;">Exportar para o NConvert...</div>
<div class="btn" style="left:1324px;top:485px;width:112px;height:21px;"></div>
<div class="btn" style="left:1442px;top:485px;width:85px;height:21px;"></div>
<svg style="left:1338px;top:487px" width="17" height="15" viewBox="0 0 17 15"><defs><linearGradient id="or" x1="0" y1="0" x2="0" y2="1"><stop offset="0" stop-color="#ffd400"/><stop offset=".5" stop-color="#ea9a10"/><stop offset="1" stop-color="#b46408"/></linearGradient></defs><rect x=".5" y=".6" width="12" height="11" rx=".8" fill="#cacaf2" stroke="#9090cc" stroke-width=".8"/><rect x="3.5" y="3.4" width="12.2" height="10.2" fill="#fff6e0" stroke="#8686c4" stroke-width=".9"/><rect x="6.2" y="4" width="9" height="9" fill="url(#or)"/><path d="M8.5 13 L11 8.6 L13 10 L15.2 7.6 V13Z" fill="#9a4c04" opacity=".7"/><path d="M1.6 5.2 Q4 4.4 5 6 L5 4.2 L9.8 8 L5.4 11.8 L5.2 10 Q2.8 10.2 2 8Z" fill="url(#ga)" stroke="#4a9a0c" stroke-width=".4"/></svg>
<div class="t" style="left:1360.50px;top:486.80px;font-size:13px;line-height:17px;color:#000;letter-spacing:0.490px;">Converter</div>
<div class="t" style="left:1457.00px;top:486.80px;font-size:13px;line-height:17px;color:#000;letter-spacing:0.353px;">Cancelar</div>
</div></div>
</body></html>
